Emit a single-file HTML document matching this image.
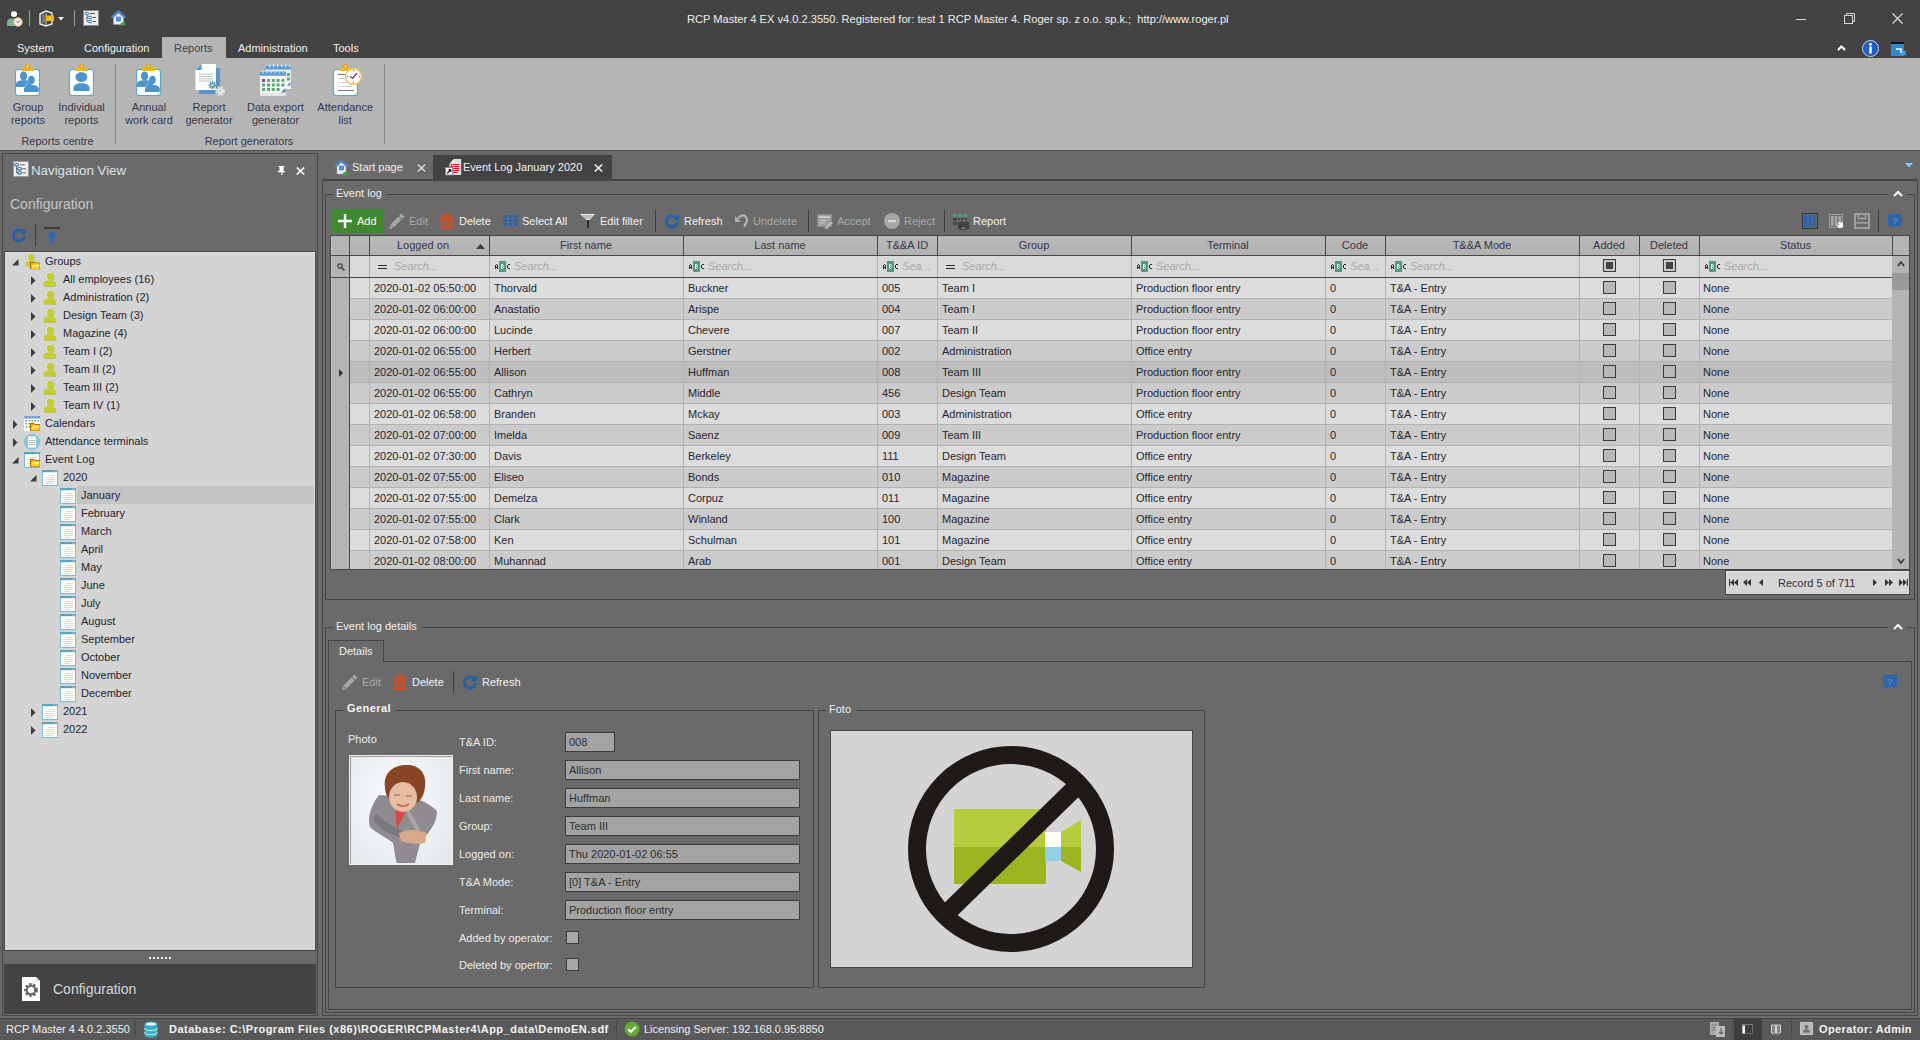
<!DOCTYPE html>
<html><head><meta charset="utf-8">
<style>
*{box-sizing:border-box;margin:0;padding:0}
html,body{width:1920px;height:1040px;overflow:hidden;background:#6a6a6a;font-family:"Liberation Sans",sans-serif;font-size:11px;color:#222}
.a{position:absolute}
.t{position:absolute;white-space:nowrap;line-height:13px}
svg{position:absolute;overflow:visible}
.m{color:#f2f2f2}
.rb{color:#35354a}
.tr{color:#23232e}
.hd{color:#36364a}
.ce{color:#25252f}
.se{color:#a9a9a9;font-style:italic}
.tb{color:#f4f4f4}
.td{color:#a9a9a9}
.lb{color:#ececec}
.fd{position:absolute;background:#a3a3a3;border:1px solid #3c3c3c}
.fv{color:#2e2e2e}
</style></head><body>
<svg width="0" height="0" style="position:absolute">
<defs>
<symbol id="person" viewBox="0 0 16 16"><ellipse cx="9" cy="5" rx="3.6" ry="4" fill="#999" opacity=".5"/><path d="M3 15v-2.5c0-2 2-3.2 4-3.6h3c2 .4 4 1.6 4 3.6V15z" fill="#999" opacity=".5"/><ellipse cx="7.6" cy="4.6" rx="3.6" ry="4" fill="#fff" opacity=".8"/><ellipse cx="8" cy="4.6" rx="3.4" ry="3.9" fill="#c5cd2a"/><path d="M1.5 14.5v-2.3c0-2 2-3.3 4-3.7h4.6c2 .4 4 1.7 4 3.7v2.3z" fill="#c5cd2a"/></symbol>
<symbol id="folder" viewBox="0 0 10 8"><path d="M.5 .5h3.5l1 1h4.5v6h-9z" fill="#e8b000" stroke="#a86e00"/><path d="M1.5 4l2-2h6v5.5h-8z" fill="#ffd21e"/><path d="M2 5.5l1.5-1.5h6" stroke="#fff" stroke-width=".8" fill="none"/></symbol>
<symbol id="page" viewBox="0 0 16 16"><rect x=".5" y=".5" width="15" height="15" fill="#fff" stroke="#7fb9cc"/><rect x="0" y="0" width="16" height="2.2" fill="#5aa3bc"/><path d="M12 1.1h1M14 1.1h1" stroke="#d8ecf2" stroke-width=".8"/><path d="M6 5.5h7M3.5 7.5h9.5M3.5 9.5h9.5M3.5 11.5h9.5M3.5 13.5h7" stroke="#dcd4c2" stroke-width=".9"/></symbol>
<symbol id="refresh" viewBox="0 0 15 15"><path d="M12.6 8.2A5.6 5.6 0 1 1 10.6 3.2" fill="none" stroke="#2860a8" stroke-width="3"/><path d="M14.2 0v6.2H8z" fill="#2860a8"/></symbol>
<symbol id="trash" viewBox="0 0 14 16"><rect x="4.6" y=".7" width="4.8" height="2.6" fill="none" stroke="#d04e28" stroke-width="1.4"/><rect x="0" y="3.2" width="14" height="2.2" fill="#d04e28"/><rect x="1" y="6.3" width="12" height="9.7" fill="#d04e28"/><rect x="3" y="8.3" width="1.4" height="5.7" fill="#6a6a6a"/><rect x="6.3" y="8.3" width="1.4" height="5.7" fill="#6a6a6a"/><rect x="9.6" y="8.3" width="1.4" height="5.7" fill="#6a6a6a"/></symbol>
<symbol id="pencil" viewBox="0 0 16 16"><path d="M12.3 .6l3.1 3.1-2.2 2.2-3.1-3.1z" fill="#a6a6a6"/><path d="M9.5 3.4l3.1 3.1-8 8-3.1-3.1z" fill="#a6a6a6"/><path d="M1 12l3 3-3.6.9z" fill="#a6a6a6"/></symbol>
<symbol id="help" viewBox="0 0 14 16"><path d="M0 0h14v12H6l-3 3v-3H0z" fill="#2e66ad"/><text x="7" y="9.5" font-family="Liberation Sans" font-size="9.5" font-weight="bold" fill="#6a86b0" text-anchor="middle">?</text></symbol>
<symbol id="abc" viewBox="0 0 16 11" shape-rendering="crispEdges"><g fill="#2a2a2a"><rect x="0" y="4" width="1" height="4"/><rect x="2" y="4" width="1" height="4"/><rect x="1" y="3" width="1" height="1"/><rect x="1" y="6" width="1" height="1"/><rect x="12" y="4" width="1" height="3"/><rect x="13" y="3" width="2" height="1"/><rect x="13" y="7" width="2" height="1"/></g><rect x="4" y="0" width="7" height="11" fill="#519a7d"/><g fill="#e8f2ee"><rect x="6" y="3" width="1" height="5"/><rect x="7" y="3" width="1" height="1"/><rect x="7" y="5" width="1" height="1"/><rect x="7" y="7" width="1" height="1"/><rect x="8" y="4" width="1" height="1"/><rect x="8" y="6" width="1" height="1"/></g></symbol>
<symbol id="chk" viewBox="0 0 13 13"><rect x=".5" y=".5" width="12" height="12" fill="#b8b8b8" stroke="#3a3a3a"/></symbol>
<symbol id="chki" viewBox="0 0 13 13"><rect x=".5" y=".5" width="12" height="12" fill="#c8c8c8" stroke="#3a3a3a"/><rect x="3" y="3" width="7" height="7" fill="#444"/></symbol>
<symbol id="clip" viewBox="0 0 26 32"><rect x="1" y="6" width="24" height="25" rx="2" fill="#fff" stroke="#4fa9c4" stroke-width="1.5"/><rect x="7" y="4" width="12" height="3" fill="#f0b30f"/><circle cx="13" cy="3" r="2.4" fill="#e8a416"/><circle cx="13" cy="3" r=".9" fill="#fff"/><path d="M21 31l4-4v4z" fill="#e6e0d0"/></symbol>
</defs></svg>

<div class="a" style="left:0px;top:0px;width:1920px;height:58px;background:#434343"></div>
<div class="t" style="left:687px;top:13px;line-height:13px;color:#eeeeee;font-size:11.1px">RCP Master 4 EX v4.0.2.3550. Registered for: test 1 RCP Master 4. Roger sp. z o.o. sp.k.;&nbsp; http://www.roger.pl</div>
<svg style="left:6px;top:10px" width="16" height="17" viewBox="0 0 16 17"><circle cx="8" cy="4" r="3" fill="#fff"/><path d="M6 1.5a2.5 2 0 0 1 4 0" fill="#3a6b8a"/><path d="M1 16v-4c0-2.5 2-3.5 4-3.5h6c2 0 4 1 4 3.5v4z" fill="#79b39a"/><circle cx="12" cy="12" r="4.3" fill="#f6f0e8" stroke="#e0b060" stroke-width="1"/><path d="M10.5 11l1.5 2 2-3" stroke="#9a80c0" stroke-width="1" fill="none"/></svg>
<div class="a" style="left:29px;top:10px;width:1px;height:16px;background:#9a9a9a"></div>
<svg style="left:38px;top:10px" width="18" height="17" viewBox="0 0 18 17"><path d="M2 4l6-3 6 2v11l-6 2-6-2z" fill="none" stroke="#f0f0f0" stroke-width="1.4"/><path d="M5 4.5v9M8 3v12" stroke="#bbb" stroke-width="1.2"/><path d="M3.5 5v8l4-1V5z" fill="#777"/><rect x="8" y="5.5" width="8" height="5.5" fill="#f5b400"/><path d="M11 7l2 1.5-2 1" stroke="#fff" stroke-width=".8" fill="none"/></svg>
<svg style="left:58px;top:17px" width="6" height="4" viewBox="0 0 6 4"><path d="M0 0h6l-3 3.5z" fill="#eee"/></svg>
<div class="a" style="left:74px;top:10px;width:1px;height:16px;background:#9a9a9a"></div>
<svg style="left:83px;top:10px" width="16" height="16" viewBox="0 0 16 16"><rect x=".5" y=".5" width="15" height="15" fill="#fff" stroke="#888"/><rect x="1" y="1" width="14" height="14" fill="#eee"/><ellipse cx="4" cy="3.5" rx="2" ry="1.3" fill="#fff" stroke="#2d6bb5" stroke-width="1"/><ellipse cx="7" cy="7.5" rx="2" ry="1.3" fill="#fff" stroke="#2d6bb5"/><ellipse cx="7" cy="11.5" rx="2" ry="1.3" fill="#fff" stroke="#2d6bb5"/><path d="M4 5v6.5h1M4 7.5h1" stroke="#333" stroke-width=".7" fill="none"/><path d="M7 3.5h5M10 7.5h3M10 11.5h3" stroke="#555" stroke-width="1"/></svg>
<svg style="left:110px;top:10px" width="17" height="16" viewBox="0 0 17 16"><path d="M1.5 7.5L8.5 1l7 6.5" fill="none" stroke="#4a86cc" stroke-width="2"/><path d="M3.5 7.5l5-4.5 5 4.5v7h-10z" fill="#eef0fa" stroke="#9aa0c0" stroke-width=".6"/><rect x="6.5" y="7" width="4" height="4" fill="#4f9ae8" stroke="#2d5ea8" stroke-width=".6"/><ellipse cx="13" cy="14" rx="2.6" ry="1.8" fill="#3faa2a"/></svg>
<div class="a" style="left:1796px;top:19px;width:10px;height:1px;background:#d8d8d8"></div>
<svg style="left:1844px;top:13px" width="11" height="11" viewBox="0 0 11 11"><rect x=".5" y="2.5" width="8" height="8" fill="none" stroke="#d8d8d8"/><path d="M2.5 2.5v-2h8v8h-2" fill="none" stroke="#d8d8d8"/></svg>
<svg style="left:1892px;top:13px" width="11" height="11" viewBox="0 0 11 11"><path d="M.5 .5l10 10M10.5 .5l-10 10" stroke="#e0e0e0" stroke-width="1.1"/></svg>
<svg style="left:1837px;top:45px" width="9" height="6" viewBox="0 0 9 6"><path d="M1 5l3.5-3.5L8 5" fill="none" stroke="#fff" stroke-width="2"/></svg>
<svg style="left:1862px;top:40px" width="17" height="17" viewBox="0 0 17 17"><circle cx="8.5" cy="8.5" r="8" fill="#1f5fbf" stroke="#c8d8f0" stroke-width="1"/><circle cx="8.5" cy="4.3" r="1.4" fill="#fff"/><rect x="7.3" y="6.5" width="2.4" height="7" fill="#fff"/></svg>
<svg style="left:1891px;top:41px" width="16" height="16" viewBox="0 0 16 16"><rect x="0" y="2" width="13" height="13" fill="#2f8ad0"/><rect x="0" y="1" width="13" height="2" fill="#111"/><path d="M5 8h5v4" stroke="#fff" stroke-width="1.5" fill="none"/><path d="M11 10l4 4M15 10l-4 4" stroke="#48a8e8" stroke-width="1.6"/></svg>
<div class="a" style="left:162px;top:37px;width:64px;height:21px;background:#b5b5b5"></div>
<div class="t m" style="left:17px;top:42px;line-height:13px">System</div>
<div class="t m" style="left:84px;top:42px;line-height:13px">Configuration</div>
<div class="t" style="left:174px;top:42px;line-height:13px;color:#3e3e55">Reports</div>
<div class="t m" style="left:238px;top:42px;line-height:13px">Administration</div>
<div class="t m" style="left:333px;top:42px;line-height:13px">Tools</div>
<div class="a" style="left:0px;top:58px;width:1920px;height:92px;background:#b5b5b5"></div>
<div class="a" style="left:0px;top:150px;width:1920px;height:1px;background:#4e4e4e"></div>
<svg style="left:14px;top:63px" width="29" height="34" viewBox="0 0 29 34"><g transform="translate(1 1)"><rect x=".5" y="5.5" width="24" height="26" rx="2.5" fill="#fff" stroke="#58a8c4" stroke-width="1.2"/><path d="M1 23v-3c0-2.3 2.5-3.3 5-3.8h5.5c2.5.5 5 1.5 5 3.8v3z" fill="#4e94cc"/><path d="M5 12c0-3 1.5-4.5 3.6-4.5S12.2 9 12.2 12s-1.6 4.6-3.6 4.6S5 15 5 12z" fill="#4e94cc"/><path d="M9 28v-3.2c0-2.3 2.4-3.4 4.8-3.9h5.2c2.4.5 4.8 1.6 4.8 3.9V28z" fill="#4e94cc"/><path d="M13 16c0-2.8 1.5-4.2 3.4-4.2s3.4 1.4 3.4 4.2-1.5 4.3-3.4 4.3S13 18.8 13 16z" fill="#4e94cc"/><path d="M12.5 18.5l-3 4.5" stroke="#fff" stroke-width=".9" stroke-dasharray="1 1"/><path d="M20 31l4.2-4.2v2.5a2 2 0 0 1-2 1.7z" fill="#e8e2cc"/><rect x="6" y="4" width="13" height="3" fill="#f0b814"/><circle cx="12.5" cy="2.3" r="2.4" fill="#e6a01a"/><rect x="12" y="1.3" width="1" height="2" fill="#fff"/></g></svg>
<svg style="left:68px;top:63px" width="29" height="34" viewBox="0 0 29 34"><g transform="translate(1 1)"><rect x=".5" y="5.5" width="24" height="26" rx="2.5" fill="#fff" stroke="#58a8c4" stroke-width="1.2"/><path d="M6.5 12.5c0-3.2 2.7-4.8 5.9-4.8s5.9 1.6 5.9 4.8-2.7 5.4-5.9 5.4-5.9-2.2-5.9-5.4z" fill="#4e94cc" transform="translate(0 1) scale(1 .95)"/><path d="M4.5 27v-3.5c0-2.4 3-3.8 6-4.3h4c3 .5 6 1.9 6 4.3V27z" fill="#4e94cc"/><path d="M20 31l4.2-4.2v2.5a2 2 0 0 1-2 1.7z" fill="#e8e2cc"/><rect x="6" y="4" width="13" height="3" fill="#f0b814"/><circle cx="12.5" cy="2.3" r="2.4" fill="#e6a01a"/><rect x="12" y="1.3" width="1" height="2" fill="#fff"/></g></svg>
<div class="a" style="left:115px;top:64px;width:1px;height:80px;background:#8a8a8a"></div>
<svg style="left:135px;top:63px" width="29" height="34" viewBox="0 0 29 34"><g transform="translate(1 1)"><rect x=".5" y="5.5" width="24" height="26" rx="2.5" fill="#fff" stroke="#58a8c4" stroke-width="1.2"/><path d="M1 23v-3c0-2.3 2.5-3.3 5-3.8h5.5c2.5.5 5 1.5 5 3.8v3z" fill="#4e94cc"/><path d="M5 12c0-3 1.5-4.5 3.6-4.5S12.2 9 12.2 12s-1.6 4.6-3.6 4.6S5 15 5 12z" fill="#4e94cc"/><path d="M9 28v-3.2c0-2.3 2.4-3.4 4.8-3.9h5.2c2.4.5 4.8 1.6 4.8 3.9V28z" fill="#4e94cc"/><path d="M13 16c0-2.8 1.5-4.2 3.4-4.2s3.4 1.4 3.4 4.2-1.5 4.3-3.4 4.3S13 18.8 13 16z" fill="#4e94cc"/><path d="M12.5 18.5l-3 4.5" stroke="#fff" stroke-width=".9" stroke-dasharray="1 1"/><path d="M20 31l4.2-4.2v2.5a2 2 0 0 1-2 1.7z" fill="#e8e2cc"/><rect x="6" y="4" width="13" height="3" fill="#f0b814"/><circle cx="12.5" cy="2.3" r="2.4" fill="#e6a01a"/><rect x="12" y="1.3" width="1" height="2" fill="#fff"/></g></svg>
<svg style="left:195px;top:63px" width="30" height="34" viewBox="0 0 30 34"><rect x="4" y="5" width="21" height="26" fill="#5a94cc"/><path d="M6.5 1h14.5v26H.5V7z" fill="#fff"/><path d="M6.5 1v6H.5z" fill="#5a94cc"/><path d="M4 11h14M4 13.5h14M4 15.8h14M4 18h14" stroke="#b8c4c4" stroke-width="1"/><g transform="translate(17.5 22.2)"><circle r="3" fill="none" stroke="#5aa0b0" stroke-width="2.2" stroke-dasharray="1.3 .9"/><circle r="2.6" fill="#5aa0b0"/><circle r="1" fill="#fff"/></g><g transform="translate(25 28)"><circle r="3.6" fill="none" stroke="#ece8e8" stroke-width="2.6" stroke-dasharray="1.7 1.2"/><circle r="3" fill="#ece8e8"/><circle r="1.1" fill="#b5b5b5"/></g></svg>
<svg style="left:259px;top:63px" width="34" height="33" viewBox="0 0 34 33"><rect x="7" y="2" width="25" height="24" fill="#f2f2f2"/><rect x="7" y="2.5" width="25" height="4" fill="#5a98d0"/><rect x="1" y="8" width="26" height="25" fill="#f6f6f6"/><rect x="1" y="8.5" width="26" height="4.2" fill="#5a98d0"/><g fill="#cfe0ee"><rect x="10" y="1" width="1.2" height="3.5"/><rect x="14" y="1" width="1.2" height="3.5"/><rect x="18" y="1" width="1.2" height="3.5"/><rect x="22" y="1" width="1.2" height="3.5"/><rect x="26" y="1" width="1.2" height="3.5"/><rect x="30" y="1" width="1.2" height="3.5"/><rect x="3.5" y="7" width="1.2" height="3.5"/><rect x="7.5" y="7" width="1.2" height="3.5"/><rect x="11.5" y="7" width="1.2" height="3.5"/><rect x="15.5" y="7" width="1.2" height="3.5"/><rect x="19.5" y="7" width="1.2" height="3.5"/><rect x="23.5" y="7" width="1.2" height="3.5"/></g><g fill="#5aa878"><rect x="3" y="16" width="3" height="3" fill="#7a4aa8"/><rect x="8" y="16" width="3" height="3"/><rect x="12.8" y="16" width="3" height="3"/><rect x="17.6" y="16" width="3" height="3"/><rect x="22.4" y="16" width="3" height="3"/><rect x="3" y="20.5" width="3" height="3"/><rect x="8" y="20.5" width="3" height="3"/><rect x="12.8" y="20.5" width="3" height="3"/><rect x="17.6" y="20.5" width="3" height="3"/><rect x="22.4" y="20.5" width="3" height="3"/><rect x="3" y="25" width="3" height="3"/><rect x="8" y="25" width="3" height="3"/><rect x="12.8" y="25" width="3" height="3"/><rect x="17.6" y="25" width="3" height="3"/><rect x="28" y="10" width="3" height="3"/><rect x="28" y="14.5" width="3" height="3"/></g><path d="M22 29.5l4.5-4.5v4.5z" fill="#4a80b8"/><path d="M28 22.5l3.5-3.5v3.5z" fill="#4a80b8"/><rect x="1" y="30" width="26" height="3" fill="#e6e6e6"/></svg>
<svg style="left:332px;top:63px" width="29" height="34" viewBox="0 0 29 34"><g transform="translate(1 1)"><rect x=".5" y="5.5" width="24" height="26" rx="2.5" fill="#fff" stroke="#58a8c4" stroke-width="1.2"/><path d="M5 10.5h10M5 14.5h14M5 18.5h14M5 22.5h14" stroke="#d0d0d0" stroke-width="1"/><path d="M5 10.5h10M5 26.5h16" stroke="#7a7a6a" stroke-width="1.1"/><path d="M20 31l4.2-4.2v2.5a2 2 0 0 1-2 1.7z" fill="#e8e2cc"/><rect x="6" y="4" width="13" height="3" fill="#f0b814"/><circle cx="12.5" cy="2.3" r="2.4" fill="#e6a01a"/><rect x="12" y="1.3" width="1" height="2" fill="#fff"/></g></svg>
<svg style="left:333px;top:64px" width="30" height="33" viewBox="0 0 30 33"><circle cx="20.5" cy="12.5" r="8" fill="#fffdf8" stroke="#f0c040" stroke-width="1.3"/><path d="M17 12.5l2.6 1.8 4.4-5" stroke="#6a40a8" stroke-width="1.4" fill="none"/><circle cx="20.5" cy="6.5" r=".7" fill="#e04040"/><circle cx="20.5" cy="18.5" r=".7" fill="#e04040"/><circle cx="14.5" cy="12.5" r=".7" fill="#e04040"/><circle cx="26.5" cy="12.5" r=".7" fill="#e04040"/></svg>
<div class="a" style="left:384px;top:64px;width:1px;height:80px;background:#8a8a8a"></div>
<div class="t rb" style="left:-32px;top:101px;width:120px;text-align:center">Group</div>
<div class="t rb" style="left:-32px;top:114px;width:120px;text-align:center">reports</div>
<div class="t rb" style="left:21.5px;top:101px;width:120px;text-align:center">Individual</div>
<div class="t rb" style="left:21.5px;top:114px;width:120px;text-align:center">reports</div>
<div class="t rb" style="left:89px;top:101px;width:120px;text-align:center">Annual</div>
<div class="t rb" style="left:89px;top:114px;width:120px;text-align:center">work card</div>
<div class="t rb" style="left:149px;top:101px;width:120px;text-align:center">Report</div>
<div class="t rb" style="left:149px;top:114px;width:120px;text-align:center">generator</div>
<div class="t rb" style="left:215.5px;top:101px;width:120px;text-align:center">Data export</div>
<div class="t rb" style="left:215.5px;top:114px;width:120px;text-align:center">generator</div>
<div class="t rb" style="left:285.2px;top:101px;width:120px;text-align:center">Attendance</div>
<div class="t rb" style="left:285.2px;top:114px;width:120px;text-align:center">list</div>
<div class="t rb" style="left:-2.5px;top:135px;width:120px;text-align:center">Reports centre</div>
<div class="t rb" style="left:189px;top:135px;width:120px;text-align:center">Report generators</div>
<div class="a" style="left:2px;top:153px;width:316px;height:1px;background:#484848"></div>
<div class="a" style="left:2px;top:153px;width:1px;height:863px;background:#484848"></div>
<div class="a" style="left:317px;top:153px;width:1px;height:863px;background:#484848"></div>
<div class="a" style="left:2px;top:1015px;width:316px;height:1px;background:#484848"></div>
<svg style="left:13px;top:161px" width="16" height="16" viewBox="0 0 16 16"><rect x=".5" y=".5" width="15" height="15" fill="#fff" stroke="#999"/><rect x="1" y="1" width="14" height="14" fill="#f0f0f0"/><ellipse cx="3.6" cy="3.8" rx="2" ry="1.3" fill="#fff" stroke="#2d6bb5" stroke-width="1.1"/><ellipse cx="6.6" cy="7.8" rx="2" ry="1.3" fill="#fff" stroke="#2d6bb5" stroke-width="1.1"/><ellipse cx="6.6" cy="11.8" rx="2" ry="1.3" fill="#fff" stroke="#2d6bb5" stroke-width="1.1"/><path d="M3.6 5.2v6.6h1M3.6 7.8h1" stroke="#333" stroke-width=".7" fill="none"/><path d="M7 3.8h5M9.5 7.8h3.5M9.5 11.8h3.5" stroke="#666" stroke-width="1"/></svg>
<div class="t" style="left:31px;top:164px;line-height:16px;font-size:13.3px;color:#dbe1e8;top:163px;line-height:16px">Navigation View</div>
<svg style="left:278px;top:166px" width="8" height="9" viewBox="0 0 8 9"><path d="M1.5 0h5v1h-1v4h1.5v1.2H4.6V9H3.4V6.2H0V5h1.5V1h-1V0z" fill="#fff"/></svg>
<svg style="left:296px;top:167px" width="9" height="8" viewBox="0 0 9 8"><path d="M.8 .5l7.4 7M8.2 .5L.8 7.5" stroke="#fff" stroke-width="1.7"/></svg>
<div class="t" style="left:10px;top:196px;font-size:14px;line-height:16px;color:#c6c6c6">Configuration</div>
<svg style="left:12px;top:228px" width="15" height="15" viewBox="0 0 15 15"><use href="#refresh" width="15" height="15"/></svg>
<div class="a" style="left:35px;top:224px;width:1px;height:22px;background:#3e3e3e"></div>
<svg style="left:44px;top:227px" width="16" height="16" viewBox="0 0 16 16"><rect x="0" y="0" width="16" height="2" fill="#3a3a3a"/><path d="M8 3.5L2 9.5h4v6.5h4V9.5h4z" fill="#2d6bb5"/></svg>
<div class="a" style="left:4px;top:251px;width:312px;height:1px;background:#444"></div>
<div class="a" style="left:4px;top:251px;width:1px;height:700px;background:#444"></div>
<div class="a" style="left:315px;top:251px;width:1px;height:700px;background:#444"></div>
<div class="a" style="left:5px;top:252px;width:310px;height:698px;background:#d4d4d4"></div>
<div class="a" style="left:5px;top:252px;width:310px;height:1px;background:#e2e2e2"></div>
<div class="a" style="left:314px;top:252px;width:1px;height:698px;background:#e0e0e0"></div>
<div class="a" style="left:4px;top:950px;width:312px;height:1px;background:#444"></div>
<div class="a" style="left:77px;top:486px;width:237px;height:18px;background:#c4c4c4"></div>
<svg style="left:12px;top:259px" width="7" height="7" viewBox="0 0 7 7"><path d="M6.5 0v6.5H0z" fill="#3c3c3c"/></svg>
<svg style="left:24px;top:254px" width="16" height="16" viewBox="0 0 16 16"><use href="#person" width="14" height="15" x="0" y="-1"/><use href="#folder" x="6" y="7.5" width="10" height="8"/></svg>
<div class="t tr" style="left:45px;top:255px;line-height:13px">Groups</div>
<svg style="left:31px;top:276px" width="5" height="9" viewBox="0 0 5 9"><path d="M0 0l4.5 4.5L0 9z" fill="#3c3c3c"/></svg>
<svg style="left:42px;top:272px" width="16" height="16" viewBox="0 0 16 16"><use href="#person" width="16" height="16"/></svg>
<div class="t tr" style="left:63px;top:273px;line-height:13px">All employees (16)</div>
<svg style="left:31px;top:294px" width="5" height="9" viewBox="0 0 5 9"><path d="M0 0l4.5 4.5L0 9z" fill="#3c3c3c"/></svg>
<svg style="left:42px;top:290px" width="16" height="16" viewBox="0 0 16 16"><use href="#person" width="16" height="16"/></svg>
<div class="t tr" style="left:63px;top:291px;line-height:13px">Administration (2)</div>
<svg style="left:31px;top:312px" width="5" height="9" viewBox="0 0 5 9"><path d="M0 0l4.5 4.5L0 9z" fill="#3c3c3c"/></svg>
<svg style="left:42px;top:308px" width="16" height="16" viewBox="0 0 16 16"><use href="#person" width="16" height="16"/></svg>
<div class="t tr" style="left:63px;top:309px;line-height:13px">Design Team (3)</div>
<svg style="left:31px;top:330px" width="5" height="9" viewBox="0 0 5 9"><path d="M0 0l4.5 4.5L0 9z" fill="#3c3c3c"/></svg>
<svg style="left:42px;top:326px" width="16" height="16" viewBox="0 0 16 16"><use href="#person" width="16" height="16"/></svg>
<div class="t tr" style="left:63px;top:327px;line-height:13px">Magazine (4)</div>
<svg style="left:31px;top:348px" width="5" height="9" viewBox="0 0 5 9"><path d="M0 0l4.5 4.5L0 9z" fill="#3c3c3c"/></svg>
<svg style="left:42px;top:344px" width="16" height="16" viewBox="0 0 16 16"><use href="#person" width="16" height="16"/></svg>
<div class="t tr" style="left:63px;top:345px;line-height:13px">Team I (2)</div>
<svg style="left:31px;top:366px" width="5" height="9" viewBox="0 0 5 9"><path d="M0 0l4.5 4.5L0 9z" fill="#3c3c3c"/></svg>
<svg style="left:42px;top:362px" width="16" height="16" viewBox="0 0 16 16"><use href="#person" width="16" height="16"/></svg>
<div class="t tr" style="left:63px;top:363px;line-height:13px">Team II (2)</div>
<svg style="left:31px;top:384px" width="5" height="9" viewBox="0 0 5 9"><path d="M0 0l4.5 4.5L0 9z" fill="#3c3c3c"/></svg>
<svg style="left:42px;top:380px" width="16" height="16" viewBox="0 0 16 16"><use href="#person" width="16" height="16"/></svg>
<div class="t tr" style="left:63px;top:381px;line-height:13px">Team III (2)</div>
<svg style="left:31px;top:402px" width="5" height="9" viewBox="0 0 5 9"><path d="M0 0l4.5 4.5L0 9z" fill="#3c3c3c"/></svg>
<svg style="left:42px;top:398px" width="16" height="16" viewBox="0 0 16 16"><use href="#person" width="16" height="16"/></svg>
<div class="t tr" style="left:63px;top:399px;line-height:13px">Team IV (1)</div>
<svg style="left:13px;top:420px" width="5" height="9" viewBox="0 0 5 9"><path d="M0 0l4.5 4.5L0 9z" fill="#3c3c3c"/></svg>
<svg style="left:24px;top:416px" width="16" height="16" viewBox="0 0 16 16"><rect x="0" y="1" width="16" height="14" fill="#fff"/><rect x="0" y="0" width="16" height="2.5" fill="#6a98cc"/><path d="M1 .3v1.5M4 .3v1.5M7 .3v1.5M10 .3v1.5M13 .3v1.5" stroke="#fff" stroke-width=".6"/><g fill="#5aa878"><rect x="1.5" y="4" width="1.5" height="1.5" fill="#7a4aa8"/><rect x="4.5" y="4" width="1.5" height="1.5"/><rect x="7.5" y="4" width="1.5" height="1.5"/><rect x="10.5" y="4" width="1.5" height="1.5"/><rect x="13.5" y="4" width="1.5" height="1.5"/><rect x="1.5" y="7" width="1.5" height="1.5"/><rect x="4.5" y="7" width="1.5" height="1.5"/><rect x="1.5" y="10" width="1.5" height="1.5"/><rect x="4.5" y="10" width="1.5" height="1.5"/></g><use href="#folder" x="6" y="7" width="10" height="8"/></svg>
<div class="t tr" style="left:45px;top:417px;line-height:13px">Calendars</div>
<svg style="left:13px;top:438px" width="5" height="9" viewBox="0 0 5 9"><path d="M0 0l4.5 4.5L0 9z" fill="#3c3c3c"/></svg>
<svg style="left:24px;top:434px" width="16" height="16" viewBox="0 0 16 16"><circle cx="8" cy="8" r="8" fill="#8cc3d5"/><rect x="4" y="2.5" width="8" height="11" fill="#fff"/><path d="M4.5 4.5h7" stroke="#cfd8dc" stroke-width=".8"/><g fill="#9aa4a8"><rect x="5" y="6" width="1.4" height="1"/><rect x="7.3" y="6" width="1.4" height="1"/><rect x="9.6" y="6" width="1.4" height="1"/><rect x="5" y="8" width="1.4" height="1"/><rect x="7.3" y="8" width="1.4" height="1"/><rect x="9.6" y="8" width="1.4" height="1"/><rect x="5" y="10" width="1.4" height="1"/><rect x="7.3" y="10" width="1.4" height="1"/><rect x="9.6" y="10" width="1.4" height="1"/></g></svg>
<div class="t tr" style="left:45px;top:435px;line-height:13px">Attendance terminals</div>
<svg style="left:12px;top:457px" width="7" height="7" viewBox="0 0 7 7"><path d="M6.5 0v6.5H0z" fill="#3c3c3c"/></svg>
<svg style="left:24px;top:452px" width="16" height="16" viewBox="0 0 16 16"><use href="#page" width="16" height="16"/><use href="#folder" x="6" y="7" width="10" height="8"/></svg>
<div class="t tr" style="left:45px;top:453px;line-height:13px">Event Log</div>
<svg style="left:30px;top:475px" width="7" height="7" viewBox="0 0 7 7"><path d="M6.5 0v6.5H0z" fill="#3c3c3c"/></svg>
<svg style="left:42px;top:470px" width="16" height="16" viewBox="0 0 16 16"><use href="#page" width="16" height="16"/></svg>
<div class="t tr" style="left:63px;top:471px;line-height:13px">2020</div>
<svg style="left:60px;top:488px" width="16" height="16" viewBox="0 0 16 16"><use href="#page" width="16" height="16"/></svg>
<div class="t tr" style="left:81px;top:489px;line-height:13px">January</div>
<svg style="left:60px;top:506px" width="16" height="16" viewBox="0 0 16 16"><use href="#page" width="16" height="16"/></svg>
<div class="t tr" style="left:81px;top:507px;line-height:13px">February</div>
<svg style="left:60px;top:524px" width="16" height="16" viewBox="0 0 16 16"><use href="#page" width="16" height="16"/></svg>
<div class="t tr" style="left:81px;top:525px;line-height:13px">March</div>
<svg style="left:60px;top:542px" width="16" height="16" viewBox="0 0 16 16"><use href="#page" width="16" height="16"/></svg>
<div class="t tr" style="left:81px;top:543px;line-height:13px">April</div>
<svg style="left:60px;top:560px" width="16" height="16" viewBox="0 0 16 16"><use href="#page" width="16" height="16"/></svg>
<div class="t tr" style="left:81px;top:561px;line-height:13px">May</div>
<svg style="left:60px;top:578px" width="16" height="16" viewBox="0 0 16 16"><use href="#page" width="16" height="16"/></svg>
<div class="t tr" style="left:81px;top:579px;line-height:13px">June</div>
<svg style="left:60px;top:596px" width="16" height="16" viewBox="0 0 16 16"><use href="#page" width="16" height="16"/></svg>
<div class="t tr" style="left:81px;top:597px;line-height:13px">July</div>
<svg style="left:60px;top:614px" width="16" height="16" viewBox="0 0 16 16"><use href="#page" width="16" height="16"/></svg>
<div class="t tr" style="left:81px;top:615px;line-height:13px">August</div>
<svg style="left:60px;top:632px" width="16" height="16" viewBox="0 0 16 16"><use href="#page" width="16" height="16"/></svg>
<div class="t tr" style="left:81px;top:633px;line-height:13px">September</div>
<svg style="left:60px;top:650px" width="16" height="16" viewBox="0 0 16 16"><use href="#page" width="16" height="16"/></svg>
<div class="t tr" style="left:81px;top:651px;line-height:13px">October</div>
<svg style="left:60px;top:668px" width="16" height="16" viewBox="0 0 16 16"><use href="#page" width="16" height="16"/></svg>
<div class="t tr" style="left:81px;top:669px;line-height:13px">November</div>
<svg style="left:60px;top:686px" width="16" height="16" viewBox="0 0 16 16"><use href="#page" width="16" height="16"/></svg>
<div class="t tr" style="left:81px;top:687px;line-height:13px">December</div>
<svg style="left:31px;top:708px" width="5" height="9" viewBox="0 0 5 9"><path d="M0 0l4.5 4.5L0 9z" fill="#3c3c3c"/></svg>
<svg style="left:42px;top:704px" width="16" height="16" viewBox="0 0 16 16"><use href="#page" width="16" height="16"/></svg>
<div class="t tr" style="left:63px;top:705px;line-height:13px">2021</div>
<svg style="left:31px;top:726px" width="5" height="9" viewBox="0 0 5 9"><path d="M0 0l4.5 4.5L0 9z" fill="#3c3c3c"/></svg>
<svg style="left:42px;top:722px" width="16" height="16" viewBox="0 0 16 16"><use href="#page" width="16" height="16"/></svg>
<div class="t tr" style="left:63px;top:723px;line-height:13px">2022</div>
<div class="a" style="left:149px;top:957px;width:2px;height:2px;background:#f0f0f0"></div>
<div class="a" style="left:153px;top:957px;width:2px;height:2px;background:#f0f0f0"></div>
<div class="a" style="left:157px;top:957px;width:2px;height:2px;background:#f0f0f0"></div>
<div class="a" style="left:161px;top:957px;width:2px;height:2px;background:#f0f0f0"></div>
<div class="a" style="left:165px;top:957px;width:2px;height:2px;background:#f0f0f0"></div>
<div class="a" style="left:169px;top:957px;width:2px;height:2px;background:#f0f0f0"></div>
<div class="a" style="left:4px;top:964px;width:312px;height:50px;background:#434343"></div>
<svg style="left:22px;top:977px" width="19" height="25" viewBox="0 0 19 25"><path d="M0 0h14l4 4v20H0z" fill="#fff"/><path d="M14 0v4h4" fill="#ddd"/><g transform="translate(9 13)"><circle r="5.2" fill="none" stroke="#666" stroke-width="3.4" stroke-dasharray="2.2 1.5"/><circle r="4.2" fill="none" stroke="#666" stroke-width="2"/><circle r="1.8" fill="#fff"/></g></svg>
<div class="t" style="left:53px;top:981px;font-size:14px;line-height:16px;color:#d4d8dc">Configuration</div>
<svg style="left:334px;top:159px" width="15" height="17" viewBox="0 0 15 17"><path d="M1 7.5L7.5 1.5 14 7.5" fill="none" stroke="#4a86cc" stroke-width="2"/><path d="M3 7.5l4.5-4 4.5 4v7.5H3z" fill="#eef0fa" stroke="#9aa0c0" stroke-width=".6"/><rect x="5.5" y="7" width="4" height="4" fill="#4f9ae8" stroke="#2d5ea8" stroke-width=".6"/><ellipse cx="11.5" cy="14.5" rx="2.6" ry="1.8" fill="#3faa2a"/></svg>
<div class="t" style="left:352px;top:161px;line-height:13px;color:#f0f0f0">Start page</div>
<svg style="left:417px;top:164px" width="9" height="8" viewBox="0 0 9 8"><path d="M.8 .5l7.4 7M8.2 .5L.8 7.5" stroke="#d8d8d8" stroke-width="1.6"/></svg>
<div class="a" style="left:433px;top:155px;width:179px;height:24px;background:#434343"></div>
<svg style="left:445px;top:158px" width="17" height="18" viewBox="0 0 17 18"><path d="M4.5 6L8.8 1H16.2V17H4.5z" fill="#e0e3e3"/><path d="M4.5 6L8.8 1v5z" fill="#f4f4f4"/><g fill="#ff0000"><circle cx="6.5" cy="6.5" r=".95"/><circle cx="6.5" cy="8.5" r=".95"/></g><path d="M8.3 6.5h5.6M8.3 8.5h5.6M8.3 10.5h5.6M8.3 12.5h5.6M8.3 14.5h3.6" stroke="#ff0000" stroke-width="1.1" stroke-linecap="round"/><rect x=".5" y="9.5" width="7.2" height="7.5" fill="#fff" stroke="#7888a0" stroke-width="1"/><path d="M2.3 15.2L5.6 11.9" stroke="#000" stroke-width="1.3"/><path d="M3 11.2h3.3v3.3z" fill="#000"/></svg>
<div class="t" style="left:463px;top:161px;line-height:13px;color:#f4f4f4">Event Log January 2020</div>
<svg style="left:594px;top:164px" width="9" height="8" viewBox="0 0 9 8"><path d="M.8 .5l7.4 7M8.2 .5L.8 7.5" stroke="#f0f0f0" stroke-width="1.7"/></svg>
<svg style="left:1905px;top:163px" width="8" height="5" viewBox="0 0 8 5"><path d="M0 0h8L4 4.5z" fill="#8ec4f8"/></svg>
<div class="a" style="left:322px;top:179px;width:1596px;height:2px;background:#454545"></div>
<div class="a" style="left:322px;top:179px;width:1px;height:837px;background:#454545"></div>
<div class="a" style="left:1917px;top:179px;width:1px;height:837px;background:#454545"></div>
<div class="a" style="left:322px;top:1015px;width:1596px;height:1px;background:#454545"></div>
<div class="a" style="left:325px;top:194px;width:8px;height:1px;background:#454545"></div>
<div class="a" style="left:387px;top:194px;width:1501px;height:1px;background:#454545"></div>
<div class="a" style="left:1907px;top:194px;width:8px;height:1px;background:#454545"></div>
<div class="a" style="left:325px;top:194px;width:1px;height:406px;background:#454545"></div>
<div class="a" style="left:1914px;top:194px;width:1px;height:406px;background:#454545"></div>
<div class="a" style="left:325px;top:599px;width:1590px;height:1px;background:#454545"></div>
<div class="t" style="left:336px;top:187px;line-height:13px;color:#f0f0f0">Event log</div>
<svg style="left:1893px;top:190px" width="10" height="7" viewBox="0 0 10 7"><path d="M1 6l4-4 4 4" fill="none" stroke="#fff" stroke-width="2"/></svg>
<div class="a" style="left:332px;top:209px;width:52px;height:24px;background:#3f8a30"></div>
<svg style="left:337px;top:213px" width="16" height="16" viewBox="0 0 16 16"><path d="M8 1v14M1 8h14" stroke="#fff" stroke-width="2.4"/></svg>
<div class="t" style="left:357px;top:215px;line-height:13px;color:#f6f6f6">Add</div>
<svg style="left:389px;top:213px" width="16" height="16" viewBox="0 0 16 16"><use href="#pencil" width="16" height="16"/></svg>
<div class="t td" style="left:409px;top:215px;line-height:13px">Edit</div>
<svg style="left:440px;top:213px" width="14" height="16" viewBox="0 0 14 16"><use href="#trash" width="14" height="16"/></svg>
<div class="t tb" style="left:459px;top:215px;line-height:13px">Delete</div>
<svg style="left:503px;top:215px" width="15" height="11" viewBox="0 0 15 11"><g fill="#2c64b0"><rect x="0" y="0" width="4" height="3"/><rect x="5.5" y="0" width="4" height="3"/><rect x="11" y="0" width="4" height="3"/><rect x="0" y="4" width="4" height="3"/><rect x="5.5" y="4" width="4" height="3"/><rect x="11" y="4" width="4" height="3"/><rect x="0" y="8" width="4" height="3"/><rect x="5.5" y="8" width="4" height="3"/><rect x="11" y="8" width="4" height="3"/></g></svg>
<div class="t tb" style="left:522px;top:215px;line-height:13px">Select All</div>
<svg style="left:580px;top:213px" width="15" height="16" viewBox="0 0 15 16"><path d="M0 1h15l-5.5 6v7.5l-3 1.5V7z" fill="#eee"/><path d="M6.5 7v9l3-1.5V7z" fill="#2a2a2a"/><path d="M2 2h11l-3.5 4h-4z" fill="#bbb"/></svg>
<div class="t tb" style="left:600px;top:215px;line-height:13px">Edit filter</div>
<div class="a" style="left:655px;top:210px;width:1px;height:22px;background:#3c3c3c"></div>
<svg style="left:665px;top:214px" width="15" height="15" viewBox="0 0 15 15"><use href="#refresh" width="15" height="15"/></svg>
<div class="t tb" style="left:684px;top:215px;line-height:13px">Refresh</div>
<svg style="left:734px;top:213px" width="14" height="16" viewBox="0 0 14 16"><path d="M1 3v6h6z" fill="#b4b4b4"/><path d="M4.2 5.5C6 2.5 9.5 1.5 11.5 3.5c2 2 1.5 6-1.5 10" fill="none" stroke="#b4b4b4" stroke-width="2.2"/></svg>
<div class="t td" style="left:753px;top:215px;line-height:13px">Undelete</div>
<div class="a" style="left:808px;top:210px;width:1px;height:22px;background:#3c3c3c"></div>
<svg style="left:817px;top:213px" width="16" height="16" viewBox="0 0 16 16"><rect x=".5" y="1.5" width="14" height="12" fill="#a0a0a0" stroke="#8a8a8a"/><rect x="2" y="3" width="11" height="2" fill="#c8c8c8"/><path d="M3 7.5h6M3 10h5" stroke="#c8c8c8" stroke-width="1"/><path d="M8 14l6-6 2 2-6 6H8z" fill="#b8b8b8" stroke="#8a8a8a" stroke-width=".6"/></svg>
<div class="t td" style="left:837px;top:215px;line-height:13px">Accept</div>
<svg style="left:884px;top:213px" width="16" height="16" viewBox="0 0 16 16"><circle cx="8" cy="8" r="8" fill="#a6a6a6"/><rect x="4" y="7" width="8" height="2.2" fill="#d8d8d8"/></svg>
<div class="t td" style="left:904px;top:215px;line-height:13px">Reject</div>
<div class="a" style="left:944px;top:210px;width:1px;height:22px;background:#3c3c3c"></div>
<svg style="left:952px;top:213px" width="18" height="17" viewBox="0 0 18 17"><g fill="#4f9a80"><rect x="1" y="1" width="4" height="3"/><rect x="6" y="1" width="4" height="3"/><rect x="11" y="1" width="4" height="3"/></g><g fill="#484848"><rect x="1" y="5" width="4" height="3"/><rect x="1" y="9" width="4" height="3"/><rect x="6" y="5" width="2" height="2"/></g><path d="M9.8 9V5.5h4.6V9" fill="none" stroke="#404040" stroke-width="1.2"/><path d="M6 9h11v7h-3v-2.5H9V16H6z" fill="#404040"/><rect x="9" y="13.5" width="5" height="3.2" fill="none" stroke="#404040" stroke-width="1"/><rect x="10" y="14.5" width="3" height="1.3" fill="#7a7a7a"/></svg>
<div class="t tb" style="left:973px;top:215px;line-height:13px">Report</div>
<svg style="left:1802px;top:213px" width="16" height="16" viewBox="0 0 16 16"><rect x=".5" y=".5" width="15" height="15" fill="#6a6a6a" stroke="#333" stroke-width="1"/><rect x="2" y="2" width="3.2" height="12" fill="#2c64b0"/><rect x="6.4" y="2" width="3.2" height="12" fill="#2c64b0"/><rect x="10.8" y="2" width="3.2" height="12" fill="#2c64b0"/></svg>
<svg style="left:1829px;top:214px" width="16" height="16" viewBox="0 0 16 16"><rect x=".5" y=".5" width="13" height="13" fill="none" stroke="#a0a0a0" stroke-width="1"/><rect x="2" y="2" width="2.6" height="10" fill="#a8a8a8"/><rect x="5.7" y="2" width="2.6" height="10" fill="#a8a8a8"/><rect x="9.4" y="2" width="2.6" height="10" fill="#a8a8a8"/><circle cx="11.2" cy="11" r="3" fill="#fff"/><path d="M8 9.5l2 1.5" stroke="#777" stroke-width="1"/></svg>
<svg style="left:1854px;top:213px" width="16" height="16" viewBox="0 0 16 16"><path d="M1 1h14v14H1z" fill="none" stroke="#a0a0a0" stroke-width="2"/><rect x="4.5" y="1" width="7" height="4.5" fill="none" stroke="#a0a0a0" stroke-width="1.6"/><rect x="2" y="9" width="12" height="1.6" fill="#a0a0a0"/></svg>
<div class="a" style="left:1878px;top:210px;width:1px;height:22px;background:#3c3c3c"></div>
<svg style="left:1888px;top:214px" width="14" height="16" viewBox="0 0 14 16"><use href="#help" width="14" height="16"/></svg>
<div class="a" style="left:330px;top:235px;width:1580px;height:1px;background:#474747"></div>
<div class="a" style="left:330px;top:235px;width:1px;height:335px;background:#474747"></div>
<div class="a" style="left:1909px;top:235px;width:1px;height:335px;background:#474747"></div>
<div class="a" style="left:330px;top:569px;width:1580px;height:1px;background:#474747"></div>
<div class="a" style="left:331px;top:236px;width:1578px;height:19px;background:linear-gradient(#b9b9b9,#b1b1b1)"></div>
<div class="a" style="left:331px;top:255px;width:1578px;height:1px;background:#474747"></div>
<div class="a" style="left:331px;top:256px;width:1561px;height:21px;background:#d9d9d9"></div>
<div class="a" style="left:331px;top:277px;width:1561px;height:1px;background:#474747"></div>
<div class="a" style="left:331px;top:236px;width:18px;height:333px;background:#b4b4b4"></div>
<div class="a" style="left:331px;top:236px;width:1px;height:333px;background:#c4c4c4"></div>
<div class="a" style="left:330px;top:255px;width:20px;height:1px;background:#474747"></div>
<div class="a" style="left:330px;top:277px;width:20px;height:1px;background:#474747"></div>
<div class="a" style="left:349px;top:236px;width:1px;height:333px;background:#474747"></div>
<div class="a" style="left:369px;top:236px;width:1px;height:20px;background:#474747"></div>
<div class="a" style="left:489px;top:236px;width:1px;height:20px;background:#474747"></div>
<div class="a" style="left:683px;top:236px;width:1px;height:20px;background:#474747"></div>
<div class="a" style="left:877px;top:236px;width:1px;height:20px;background:#474747"></div>
<div class="a" style="left:937px;top:236px;width:1px;height:20px;background:#474747"></div>
<div class="a" style="left:1131px;top:236px;width:1px;height:20px;background:#474747"></div>
<div class="a" style="left:1325px;top:236px;width:1px;height:20px;background:#474747"></div>
<div class="a" style="left:1385px;top:236px;width:1px;height:20px;background:#474747"></div>
<div class="a" style="left:1579px;top:236px;width:1px;height:20px;background:#474747"></div>
<div class="a" style="left:1639px;top:236px;width:1px;height:20px;background:#474747"></div>
<div class="a" style="left:1699px;top:236px;width:1px;height:20px;background:#474747"></div>
<div class="a" style="left:1892px;top:236px;width:1px;height:20px;background:#474747"></div>
<div class="a" style="left:1892px;top:236px;width:1px;height:20px;background:#474747"></div>
<div class="a" style="left:369px;top:256px;width:1px;height:21px;background:#b2b2b2"></div>
<div class="a" style="left:489px;top:256px;width:1px;height:21px;background:#b2b2b2"></div>
<div class="a" style="left:683px;top:256px;width:1px;height:21px;background:#b2b2b2"></div>
<div class="a" style="left:877px;top:256px;width:1px;height:21px;background:#b2b2b2"></div>
<div class="a" style="left:937px;top:256px;width:1px;height:21px;background:#b2b2b2"></div>
<div class="a" style="left:1131px;top:256px;width:1px;height:21px;background:#b2b2b2"></div>
<div class="a" style="left:1325px;top:256px;width:1px;height:21px;background:#b2b2b2"></div>
<div class="a" style="left:1385px;top:256px;width:1px;height:21px;background:#b2b2b2"></div>
<div class="a" style="left:1579px;top:256px;width:1px;height:21px;background:#b2b2b2"></div>
<div class="a" style="left:1639px;top:256px;width:1px;height:21px;background:#b2b2b2"></div>
<div class="a" style="left:1699px;top:256px;width:1px;height:21px;background:#b2b2b2"></div>

<div class="t hd" style="left:397px;top:239px;line-height:13px">Logged on</div>
<div class="t hd" style="left:489px;top:239px;width:194px;text-align:center">First name</div>
<div class="t hd" style="left:683px;top:239px;width:194px;text-align:center">Last name</div>
<div class="t hd" style="left:877px;top:239px;width:60px;text-align:center">T&amp;&amp;A ID</div>
<div class="t hd" style="left:937px;top:239px;width:194px;text-align:center">Group</div>
<div class="t hd" style="left:1131px;top:239px;width:194px;text-align:center">Terminal</div>
<div class="t hd" style="left:1325px;top:239px;width:60px;text-align:center">Code</div>
<div class="t hd" style="left:1385px;top:239px;width:194px;text-align:center">T&amp;&amp;A Mode</div>
<div class="t hd" style="left:1579px;top:239px;width:60px;text-align:center">Added</div>
<div class="t hd" style="left:1639px;top:239px;width:60px;text-align:center">Deleted</div>
<div class="t hd" style="left:1699px;top:239px;width:193px;text-align:center">Status</div>
<svg style="left:476px;top:244px" width="9" height="5" viewBox="0 0 9 5"><path d="M0 5L4.5 0 9 5z" fill="#3a3a3a"/></svg>
<svg style="left:337px;top:263px" width="8" height="8" viewBox="0 0 8 8"><circle cx="3" cy="3" r="2.2" fill="none" stroke="#444" stroke-width="1.3"/><path d="M4.5 4.5L7.5 7.5" stroke="#444" stroke-width="1.5"/></svg>
<div class="a" style="left:378px;top:265px;width:9px;height:1px;background:#2a2a2a"></div>
<div class="a" style="left:378px;top:268px;width:9px;height:1px;background:#2a2a2a"></div>
<div class="t se" style="left:394px;top:260px;line-height:13px">Search...</div>
<svg style="left:495px;top:261px" width="16" height="11" viewBox="0 0 16 11"><use href="#abc" width="16" height="11"/></svg>
<div class="t se" style="left:514px;top:260px;line-height:13px">Search...</div>
<svg style="left:689px;top:261px" width="16" height="11" viewBox="0 0 16 11"><use href="#abc" width="16" height="11"/></svg>
<div class="t se" style="left:708px;top:260px;line-height:13px">Search...</div>
<svg style="left:883px;top:261px" width="16" height="11" viewBox="0 0 16 11"><use href="#abc" width="16" height="11"/></svg>
<div class="t se" style="left:902px;top:260px;line-height:13px">Sea...</div>
<div class="a" style="left:946px;top:265px;width:9px;height:1px;background:#2a2a2a"></div>
<div class="a" style="left:946px;top:268px;width:9px;height:1px;background:#2a2a2a"></div>
<div class="t se" style="left:962px;top:260px;line-height:13px">Search...</div>
<svg style="left:1137px;top:261px" width="16" height="11" viewBox="0 0 16 11"><use href="#abc" width="16" height="11"/></svg>
<div class="t se" style="left:1156px;top:260px;line-height:13px">Search...</div>
<svg style="left:1331px;top:261px" width="16" height="11" viewBox="0 0 16 11"><use href="#abc" width="16" height="11"/></svg>
<div class="t se" style="left:1350px;top:260px;line-height:13px">Sea...</div>
<svg style="left:1391px;top:261px" width="16" height="11" viewBox="0 0 16 11"><use href="#abc" width="16" height="11"/></svg>
<div class="t se" style="left:1410px;top:260px;line-height:13px">Search...</div>
<svg style="left:1603px;top:259px" width="13" height="13" viewBox="0 0 13 13"><use href="#chki" width="13" height="13"/></svg>
<svg style="left:1663px;top:259px" width="13" height="13" viewBox="0 0 13 13"><use href="#chki" width="13" height="13"/></svg>
<svg style="left:1705px;top:261px" width="16" height="11" viewBox="0 0 16 11"><use href="#abc" width="16" height="11"/></svg>
<div class="t se" style="left:1724px;top:260px;line-height:13px">Search...</div>
<div class="a" style="left:350px;top:278px;width:1542px;height:20px;background:#dcdcdc"></div>
<div class="a" style="left:350px;top:298px;width:1542px;height:1px;background:#b2b2b2"></div>
<div class="a" style="left:369px;top:278px;width:1px;height:20px;background:#b2b2b2"></div>
<div class="a" style="left:489px;top:278px;width:1px;height:20px;background:#b2b2b2"></div>
<div class="a" style="left:683px;top:278px;width:1px;height:20px;background:#b2b2b2"></div>
<div class="a" style="left:877px;top:278px;width:1px;height:20px;background:#b2b2b2"></div>
<div class="a" style="left:937px;top:278px;width:1px;height:20px;background:#b2b2b2"></div>
<div class="a" style="left:1131px;top:278px;width:1px;height:20px;background:#b2b2b2"></div>
<div class="a" style="left:1325px;top:278px;width:1px;height:20px;background:#b2b2b2"></div>
<div class="a" style="left:1385px;top:278px;width:1px;height:20px;background:#b2b2b2"></div>
<div class="a" style="left:1579px;top:278px;width:1px;height:20px;background:#b2b2b2"></div>
<div class="a" style="left:1639px;top:278px;width:1px;height:20px;background:#b2b2b2"></div>
<div class="a" style="left:1699px;top:278px;width:1px;height:20px;background:#b2b2b2"></div>
<div class="t ce" style="left:374px;top:282px;line-height:13px">2020-01-02 05:50:00</div>
<div class="t ce" style="left:494px;top:282px;line-height:13px">Thorvald</div>
<div class="t ce" style="left:688px;top:282px;line-height:13px">Buckner</div>
<div class="t ce" style="left:882px;top:282px;line-height:13px">005</div>
<div class="t ce" style="left:942px;top:282px;line-height:13px">Team I</div>
<div class="t ce" style="left:1136px;top:282px;line-height:13px">Production floor entry</div>
<div class="t ce" style="left:1330px;top:282px;line-height:13px">0</div>
<div class="t ce" style="left:1390px;top:282px;line-height:13px">T&amp;A - Entry</div>
<svg style="left:1603px;top:281px" width="13" height="13" viewBox="0 0 13 13"><use href="#chk" width="13" height="13"/></svg>
<svg style="left:1663px;top:281px" width="13" height="13" viewBox="0 0 13 13"><use href="#chk" width="13" height="13"/></svg>
<div class="t ce" style="left:1703px;top:282px;line-height:13px">None</div>
<div class="a" style="left:350px;top:299px;width:1542px;height:20px;background:#cbcbcb"></div>
<div class="a" style="left:350px;top:319px;width:1542px;height:1px;background:#b2b2b2"></div>
<div class="a" style="left:369px;top:299px;width:1px;height:20px;background:#b2b2b2"></div>
<div class="a" style="left:489px;top:299px;width:1px;height:20px;background:#b2b2b2"></div>
<div class="a" style="left:683px;top:299px;width:1px;height:20px;background:#b2b2b2"></div>
<div class="a" style="left:877px;top:299px;width:1px;height:20px;background:#b2b2b2"></div>
<div class="a" style="left:937px;top:299px;width:1px;height:20px;background:#b2b2b2"></div>
<div class="a" style="left:1131px;top:299px;width:1px;height:20px;background:#b2b2b2"></div>
<div class="a" style="left:1325px;top:299px;width:1px;height:20px;background:#b2b2b2"></div>
<div class="a" style="left:1385px;top:299px;width:1px;height:20px;background:#b2b2b2"></div>
<div class="a" style="left:1579px;top:299px;width:1px;height:20px;background:#b2b2b2"></div>
<div class="a" style="left:1639px;top:299px;width:1px;height:20px;background:#b2b2b2"></div>
<div class="a" style="left:1699px;top:299px;width:1px;height:20px;background:#b2b2b2"></div>
<div class="t ce" style="left:374px;top:303px;line-height:13px">2020-01-02 06:00:00</div>
<div class="t ce" style="left:494px;top:303px;line-height:13px">Anastatio</div>
<div class="t ce" style="left:688px;top:303px;line-height:13px">Arispe</div>
<div class="t ce" style="left:882px;top:303px;line-height:13px">004</div>
<div class="t ce" style="left:942px;top:303px;line-height:13px">Team I</div>
<div class="t ce" style="left:1136px;top:303px;line-height:13px">Production floor entry</div>
<div class="t ce" style="left:1330px;top:303px;line-height:13px">0</div>
<div class="t ce" style="left:1390px;top:303px;line-height:13px">T&amp;A - Entry</div>
<svg style="left:1603px;top:302px" width="13" height="13" viewBox="0 0 13 13"><use href="#chk" width="13" height="13"/></svg>
<svg style="left:1663px;top:302px" width="13" height="13" viewBox="0 0 13 13"><use href="#chk" width="13" height="13"/></svg>
<div class="t ce" style="left:1703px;top:303px;line-height:13px">None</div>
<div class="a" style="left:350px;top:320px;width:1542px;height:20px;background:#dcdcdc"></div>
<div class="a" style="left:350px;top:340px;width:1542px;height:1px;background:#b2b2b2"></div>
<div class="a" style="left:369px;top:320px;width:1px;height:20px;background:#b2b2b2"></div>
<div class="a" style="left:489px;top:320px;width:1px;height:20px;background:#b2b2b2"></div>
<div class="a" style="left:683px;top:320px;width:1px;height:20px;background:#b2b2b2"></div>
<div class="a" style="left:877px;top:320px;width:1px;height:20px;background:#b2b2b2"></div>
<div class="a" style="left:937px;top:320px;width:1px;height:20px;background:#b2b2b2"></div>
<div class="a" style="left:1131px;top:320px;width:1px;height:20px;background:#b2b2b2"></div>
<div class="a" style="left:1325px;top:320px;width:1px;height:20px;background:#b2b2b2"></div>
<div class="a" style="left:1385px;top:320px;width:1px;height:20px;background:#b2b2b2"></div>
<div class="a" style="left:1579px;top:320px;width:1px;height:20px;background:#b2b2b2"></div>
<div class="a" style="left:1639px;top:320px;width:1px;height:20px;background:#b2b2b2"></div>
<div class="a" style="left:1699px;top:320px;width:1px;height:20px;background:#b2b2b2"></div>
<div class="t ce" style="left:374px;top:324px;line-height:13px">2020-01-02 06:00:00</div>
<div class="t ce" style="left:494px;top:324px;line-height:13px">Lucinde</div>
<div class="t ce" style="left:688px;top:324px;line-height:13px">Chevere</div>
<div class="t ce" style="left:882px;top:324px;line-height:13px">007</div>
<div class="t ce" style="left:942px;top:324px;line-height:13px">Team II</div>
<div class="t ce" style="left:1136px;top:324px;line-height:13px">Production floor entry</div>
<div class="t ce" style="left:1330px;top:324px;line-height:13px">0</div>
<div class="t ce" style="left:1390px;top:324px;line-height:13px">T&amp;A - Entry</div>
<svg style="left:1603px;top:323px" width="13" height="13" viewBox="0 0 13 13"><use href="#chk" width="13" height="13"/></svg>
<svg style="left:1663px;top:323px" width="13" height="13" viewBox="0 0 13 13"><use href="#chk" width="13" height="13"/></svg>
<div class="t ce" style="left:1703px;top:324px;line-height:13px">None</div>
<div class="a" style="left:350px;top:341px;width:1542px;height:20px;background:#cbcbcb"></div>
<div class="a" style="left:350px;top:361px;width:1542px;height:1px;background:#b2b2b2"></div>
<div class="a" style="left:369px;top:341px;width:1px;height:20px;background:#b2b2b2"></div>
<div class="a" style="left:489px;top:341px;width:1px;height:20px;background:#b2b2b2"></div>
<div class="a" style="left:683px;top:341px;width:1px;height:20px;background:#b2b2b2"></div>
<div class="a" style="left:877px;top:341px;width:1px;height:20px;background:#b2b2b2"></div>
<div class="a" style="left:937px;top:341px;width:1px;height:20px;background:#b2b2b2"></div>
<div class="a" style="left:1131px;top:341px;width:1px;height:20px;background:#b2b2b2"></div>
<div class="a" style="left:1325px;top:341px;width:1px;height:20px;background:#b2b2b2"></div>
<div class="a" style="left:1385px;top:341px;width:1px;height:20px;background:#b2b2b2"></div>
<div class="a" style="left:1579px;top:341px;width:1px;height:20px;background:#b2b2b2"></div>
<div class="a" style="left:1639px;top:341px;width:1px;height:20px;background:#b2b2b2"></div>
<div class="a" style="left:1699px;top:341px;width:1px;height:20px;background:#b2b2b2"></div>
<div class="t ce" style="left:374px;top:345px;line-height:13px">2020-01-02 06:55:00</div>
<div class="t ce" style="left:494px;top:345px;line-height:13px">Herbert</div>
<div class="t ce" style="left:688px;top:345px;line-height:13px">Gerstner</div>
<div class="t ce" style="left:882px;top:345px;line-height:13px">002</div>
<div class="t ce" style="left:942px;top:345px;line-height:13px">Administration</div>
<div class="t ce" style="left:1136px;top:345px;line-height:13px">Office entry</div>
<div class="t ce" style="left:1330px;top:345px;line-height:13px">0</div>
<div class="t ce" style="left:1390px;top:345px;line-height:13px">T&amp;A - Entry</div>
<svg style="left:1603px;top:344px" width="13" height="13" viewBox="0 0 13 13"><use href="#chk" width="13" height="13"/></svg>
<svg style="left:1663px;top:344px" width="13" height="13" viewBox="0 0 13 13"><use href="#chk" width="13" height="13"/></svg>
<div class="t ce" style="left:1703px;top:345px;line-height:13px">None</div>
<div class="a" style="left:350px;top:362px;width:1542px;height:20px;background:#bdbdbd"></div>
<div class="a" style="left:350px;top:382px;width:1542px;height:1px;background:#b2b2b2"></div>
<div class="a" style="left:369px;top:362px;width:1px;height:20px;background:#b2b2b2"></div>
<div class="a" style="left:489px;top:362px;width:1px;height:20px;background:#b2b2b2"></div>
<div class="a" style="left:683px;top:362px;width:1px;height:20px;background:#b2b2b2"></div>
<div class="a" style="left:877px;top:362px;width:1px;height:20px;background:#b2b2b2"></div>
<div class="a" style="left:937px;top:362px;width:1px;height:20px;background:#b2b2b2"></div>
<div class="a" style="left:1131px;top:362px;width:1px;height:20px;background:#b2b2b2"></div>
<div class="a" style="left:1325px;top:362px;width:1px;height:20px;background:#b2b2b2"></div>
<div class="a" style="left:1385px;top:362px;width:1px;height:20px;background:#b2b2b2"></div>
<div class="a" style="left:1579px;top:362px;width:1px;height:20px;background:#b2b2b2"></div>
<div class="a" style="left:1639px;top:362px;width:1px;height:20px;background:#b2b2b2"></div>
<div class="a" style="left:1699px;top:362px;width:1px;height:20px;background:#b2b2b2"></div>
<div class="t ce" style="left:374px;top:366px;line-height:13px">2020-01-02 06:55:00</div>
<div class="t ce" style="left:494px;top:366px;line-height:13px">Allison</div>
<div class="t ce" style="left:688px;top:366px;line-height:13px">Huffman</div>
<div class="t ce" style="left:882px;top:366px;line-height:13px">008</div>
<div class="t ce" style="left:942px;top:366px;line-height:13px">Team III</div>
<div class="t ce" style="left:1136px;top:366px;line-height:13px">Production floor entry</div>
<div class="t ce" style="left:1330px;top:366px;line-height:13px">0</div>
<div class="t ce" style="left:1390px;top:366px;line-height:13px">T&amp;A - Entry</div>
<svg style="left:1603px;top:365px" width="13" height="13" viewBox="0 0 13 13"><use href="#chk" width="13" height="13"/></svg>
<svg style="left:1663px;top:365px" width="13" height="13" viewBox="0 0 13 13"><use href="#chk" width="13" height="13"/></svg>
<div class="t ce" style="left:1703px;top:366px;line-height:13px">None</div>
<div class="a" style="left:350px;top:383px;width:1542px;height:20px;background:#cbcbcb"></div>
<div class="a" style="left:350px;top:403px;width:1542px;height:1px;background:#b2b2b2"></div>
<div class="a" style="left:369px;top:383px;width:1px;height:20px;background:#b2b2b2"></div>
<div class="a" style="left:489px;top:383px;width:1px;height:20px;background:#b2b2b2"></div>
<div class="a" style="left:683px;top:383px;width:1px;height:20px;background:#b2b2b2"></div>
<div class="a" style="left:877px;top:383px;width:1px;height:20px;background:#b2b2b2"></div>
<div class="a" style="left:937px;top:383px;width:1px;height:20px;background:#b2b2b2"></div>
<div class="a" style="left:1131px;top:383px;width:1px;height:20px;background:#b2b2b2"></div>
<div class="a" style="left:1325px;top:383px;width:1px;height:20px;background:#b2b2b2"></div>
<div class="a" style="left:1385px;top:383px;width:1px;height:20px;background:#b2b2b2"></div>
<div class="a" style="left:1579px;top:383px;width:1px;height:20px;background:#b2b2b2"></div>
<div class="a" style="left:1639px;top:383px;width:1px;height:20px;background:#b2b2b2"></div>
<div class="a" style="left:1699px;top:383px;width:1px;height:20px;background:#b2b2b2"></div>
<div class="t ce" style="left:374px;top:387px;line-height:13px">2020-01-02 06:55:00</div>
<div class="t ce" style="left:494px;top:387px;line-height:13px">Cathryn</div>
<div class="t ce" style="left:688px;top:387px;line-height:13px">Middle</div>
<div class="t ce" style="left:882px;top:387px;line-height:13px">456</div>
<div class="t ce" style="left:942px;top:387px;line-height:13px">Design Team</div>
<div class="t ce" style="left:1136px;top:387px;line-height:13px">Production floor entry</div>
<div class="t ce" style="left:1330px;top:387px;line-height:13px">0</div>
<div class="t ce" style="left:1390px;top:387px;line-height:13px">T&amp;A - Entry</div>
<svg style="left:1603px;top:386px" width="13" height="13" viewBox="0 0 13 13"><use href="#chk" width="13" height="13"/></svg>
<svg style="left:1663px;top:386px" width="13" height="13" viewBox="0 0 13 13"><use href="#chk" width="13" height="13"/></svg>
<div class="t ce" style="left:1703px;top:387px;line-height:13px">None</div>
<div class="a" style="left:350px;top:404px;width:1542px;height:20px;background:#dcdcdc"></div>
<div class="a" style="left:350px;top:424px;width:1542px;height:1px;background:#b2b2b2"></div>
<div class="a" style="left:369px;top:404px;width:1px;height:20px;background:#b2b2b2"></div>
<div class="a" style="left:489px;top:404px;width:1px;height:20px;background:#b2b2b2"></div>
<div class="a" style="left:683px;top:404px;width:1px;height:20px;background:#b2b2b2"></div>
<div class="a" style="left:877px;top:404px;width:1px;height:20px;background:#b2b2b2"></div>
<div class="a" style="left:937px;top:404px;width:1px;height:20px;background:#b2b2b2"></div>
<div class="a" style="left:1131px;top:404px;width:1px;height:20px;background:#b2b2b2"></div>
<div class="a" style="left:1325px;top:404px;width:1px;height:20px;background:#b2b2b2"></div>
<div class="a" style="left:1385px;top:404px;width:1px;height:20px;background:#b2b2b2"></div>
<div class="a" style="left:1579px;top:404px;width:1px;height:20px;background:#b2b2b2"></div>
<div class="a" style="left:1639px;top:404px;width:1px;height:20px;background:#b2b2b2"></div>
<div class="a" style="left:1699px;top:404px;width:1px;height:20px;background:#b2b2b2"></div>
<div class="t ce" style="left:374px;top:408px;line-height:13px">2020-01-02 06:58:00</div>
<div class="t ce" style="left:494px;top:408px;line-height:13px">Branden</div>
<div class="t ce" style="left:688px;top:408px;line-height:13px">Mckay</div>
<div class="t ce" style="left:882px;top:408px;line-height:13px">003</div>
<div class="t ce" style="left:942px;top:408px;line-height:13px">Administration</div>
<div class="t ce" style="left:1136px;top:408px;line-height:13px">Office entry</div>
<div class="t ce" style="left:1330px;top:408px;line-height:13px">0</div>
<div class="t ce" style="left:1390px;top:408px;line-height:13px">T&amp;A - Entry</div>
<svg style="left:1603px;top:407px" width="13" height="13" viewBox="0 0 13 13"><use href="#chk" width="13" height="13"/></svg>
<svg style="left:1663px;top:407px" width="13" height="13" viewBox="0 0 13 13"><use href="#chk" width="13" height="13"/></svg>
<div class="t ce" style="left:1703px;top:408px;line-height:13px">None</div>
<div class="a" style="left:350px;top:425px;width:1542px;height:20px;background:#cbcbcb"></div>
<div class="a" style="left:350px;top:445px;width:1542px;height:1px;background:#b2b2b2"></div>
<div class="a" style="left:369px;top:425px;width:1px;height:20px;background:#b2b2b2"></div>
<div class="a" style="left:489px;top:425px;width:1px;height:20px;background:#b2b2b2"></div>
<div class="a" style="left:683px;top:425px;width:1px;height:20px;background:#b2b2b2"></div>
<div class="a" style="left:877px;top:425px;width:1px;height:20px;background:#b2b2b2"></div>
<div class="a" style="left:937px;top:425px;width:1px;height:20px;background:#b2b2b2"></div>
<div class="a" style="left:1131px;top:425px;width:1px;height:20px;background:#b2b2b2"></div>
<div class="a" style="left:1325px;top:425px;width:1px;height:20px;background:#b2b2b2"></div>
<div class="a" style="left:1385px;top:425px;width:1px;height:20px;background:#b2b2b2"></div>
<div class="a" style="left:1579px;top:425px;width:1px;height:20px;background:#b2b2b2"></div>
<div class="a" style="left:1639px;top:425px;width:1px;height:20px;background:#b2b2b2"></div>
<div class="a" style="left:1699px;top:425px;width:1px;height:20px;background:#b2b2b2"></div>
<div class="t ce" style="left:374px;top:429px;line-height:13px">2020-01-02 07:00:00</div>
<div class="t ce" style="left:494px;top:429px;line-height:13px">Imelda</div>
<div class="t ce" style="left:688px;top:429px;line-height:13px">Saenz</div>
<div class="t ce" style="left:882px;top:429px;line-height:13px">009</div>
<div class="t ce" style="left:942px;top:429px;line-height:13px">Team III</div>
<div class="t ce" style="left:1136px;top:429px;line-height:13px">Production floor entry</div>
<div class="t ce" style="left:1330px;top:429px;line-height:13px">0</div>
<div class="t ce" style="left:1390px;top:429px;line-height:13px">T&amp;A - Entry</div>
<svg style="left:1603px;top:428px" width="13" height="13" viewBox="0 0 13 13"><use href="#chk" width="13" height="13"/></svg>
<svg style="left:1663px;top:428px" width="13" height="13" viewBox="0 0 13 13"><use href="#chk" width="13" height="13"/></svg>
<div class="t ce" style="left:1703px;top:429px;line-height:13px">None</div>
<div class="a" style="left:350px;top:446px;width:1542px;height:20px;background:#dcdcdc"></div>
<div class="a" style="left:350px;top:466px;width:1542px;height:1px;background:#b2b2b2"></div>
<div class="a" style="left:369px;top:446px;width:1px;height:20px;background:#b2b2b2"></div>
<div class="a" style="left:489px;top:446px;width:1px;height:20px;background:#b2b2b2"></div>
<div class="a" style="left:683px;top:446px;width:1px;height:20px;background:#b2b2b2"></div>
<div class="a" style="left:877px;top:446px;width:1px;height:20px;background:#b2b2b2"></div>
<div class="a" style="left:937px;top:446px;width:1px;height:20px;background:#b2b2b2"></div>
<div class="a" style="left:1131px;top:446px;width:1px;height:20px;background:#b2b2b2"></div>
<div class="a" style="left:1325px;top:446px;width:1px;height:20px;background:#b2b2b2"></div>
<div class="a" style="left:1385px;top:446px;width:1px;height:20px;background:#b2b2b2"></div>
<div class="a" style="left:1579px;top:446px;width:1px;height:20px;background:#b2b2b2"></div>
<div class="a" style="left:1639px;top:446px;width:1px;height:20px;background:#b2b2b2"></div>
<div class="a" style="left:1699px;top:446px;width:1px;height:20px;background:#b2b2b2"></div>
<div class="t ce" style="left:374px;top:450px;line-height:13px">2020-01-02 07:30:00</div>
<div class="t ce" style="left:494px;top:450px;line-height:13px">Davis</div>
<div class="t ce" style="left:688px;top:450px;line-height:13px">Berkeley</div>
<div class="t ce" style="left:882px;top:450px;line-height:13px">111</div>
<div class="t ce" style="left:942px;top:450px;line-height:13px">Design Team</div>
<div class="t ce" style="left:1136px;top:450px;line-height:13px">Office entry</div>
<div class="t ce" style="left:1330px;top:450px;line-height:13px">0</div>
<div class="t ce" style="left:1390px;top:450px;line-height:13px">T&amp;A - Entry</div>
<svg style="left:1603px;top:449px" width="13" height="13" viewBox="0 0 13 13"><use href="#chk" width="13" height="13"/></svg>
<svg style="left:1663px;top:449px" width="13" height="13" viewBox="0 0 13 13"><use href="#chk" width="13" height="13"/></svg>
<div class="t ce" style="left:1703px;top:450px;line-height:13px">None</div>
<div class="a" style="left:350px;top:467px;width:1542px;height:20px;background:#cbcbcb"></div>
<div class="a" style="left:350px;top:487px;width:1542px;height:1px;background:#b2b2b2"></div>
<div class="a" style="left:369px;top:467px;width:1px;height:20px;background:#b2b2b2"></div>
<div class="a" style="left:489px;top:467px;width:1px;height:20px;background:#b2b2b2"></div>
<div class="a" style="left:683px;top:467px;width:1px;height:20px;background:#b2b2b2"></div>
<div class="a" style="left:877px;top:467px;width:1px;height:20px;background:#b2b2b2"></div>
<div class="a" style="left:937px;top:467px;width:1px;height:20px;background:#b2b2b2"></div>
<div class="a" style="left:1131px;top:467px;width:1px;height:20px;background:#b2b2b2"></div>
<div class="a" style="left:1325px;top:467px;width:1px;height:20px;background:#b2b2b2"></div>
<div class="a" style="left:1385px;top:467px;width:1px;height:20px;background:#b2b2b2"></div>
<div class="a" style="left:1579px;top:467px;width:1px;height:20px;background:#b2b2b2"></div>
<div class="a" style="left:1639px;top:467px;width:1px;height:20px;background:#b2b2b2"></div>
<div class="a" style="left:1699px;top:467px;width:1px;height:20px;background:#b2b2b2"></div>
<div class="t ce" style="left:374px;top:471px;line-height:13px">2020-01-02 07:55:00</div>
<div class="t ce" style="left:494px;top:471px;line-height:13px">Eliseo</div>
<div class="t ce" style="left:688px;top:471px;line-height:13px">Bonds</div>
<div class="t ce" style="left:882px;top:471px;line-height:13px">010</div>
<div class="t ce" style="left:942px;top:471px;line-height:13px">Magazine</div>
<div class="t ce" style="left:1136px;top:471px;line-height:13px">Office entry</div>
<div class="t ce" style="left:1330px;top:471px;line-height:13px">0</div>
<div class="t ce" style="left:1390px;top:471px;line-height:13px">T&amp;A - Entry</div>
<svg style="left:1603px;top:470px" width="13" height="13" viewBox="0 0 13 13"><use href="#chk" width="13" height="13"/></svg>
<svg style="left:1663px;top:470px" width="13" height="13" viewBox="0 0 13 13"><use href="#chk" width="13" height="13"/></svg>
<div class="t ce" style="left:1703px;top:471px;line-height:13px">None</div>
<div class="a" style="left:350px;top:488px;width:1542px;height:20px;background:#dcdcdc"></div>
<div class="a" style="left:350px;top:508px;width:1542px;height:1px;background:#b2b2b2"></div>
<div class="a" style="left:369px;top:488px;width:1px;height:20px;background:#b2b2b2"></div>
<div class="a" style="left:489px;top:488px;width:1px;height:20px;background:#b2b2b2"></div>
<div class="a" style="left:683px;top:488px;width:1px;height:20px;background:#b2b2b2"></div>
<div class="a" style="left:877px;top:488px;width:1px;height:20px;background:#b2b2b2"></div>
<div class="a" style="left:937px;top:488px;width:1px;height:20px;background:#b2b2b2"></div>
<div class="a" style="left:1131px;top:488px;width:1px;height:20px;background:#b2b2b2"></div>
<div class="a" style="left:1325px;top:488px;width:1px;height:20px;background:#b2b2b2"></div>
<div class="a" style="left:1385px;top:488px;width:1px;height:20px;background:#b2b2b2"></div>
<div class="a" style="left:1579px;top:488px;width:1px;height:20px;background:#b2b2b2"></div>
<div class="a" style="left:1639px;top:488px;width:1px;height:20px;background:#b2b2b2"></div>
<div class="a" style="left:1699px;top:488px;width:1px;height:20px;background:#b2b2b2"></div>
<div class="t ce" style="left:374px;top:492px;line-height:13px">2020-01-02 07:55:00</div>
<div class="t ce" style="left:494px;top:492px;line-height:13px">Demelza</div>
<div class="t ce" style="left:688px;top:492px;line-height:13px">Corpuz</div>
<div class="t ce" style="left:882px;top:492px;line-height:13px">011</div>
<div class="t ce" style="left:942px;top:492px;line-height:13px">Magazine</div>
<div class="t ce" style="left:1136px;top:492px;line-height:13px">Office entry</div>
<div class="t ce" style="left:1330px;top:492px;line-height:13px">0</div>
<div class="t ce" style="left:1390px;top:492px;line-height:13px">T&amp;A - Entry</div>
<svg style="left:1603px;top:491px" width="13" height="13" viewBox="0 0 13 13"><use href="#chk" width="13" height="13"/></svg>
<svg style="left:1663px;top:491px" width="13" height="13" viewBox="0 0 13 13"><use href="#chk" width="13" height="13"/></svg>
<div class="t ce" style="left:1703px;top:492px;line-height:13px">None</div>
<div class="a" style="left:350px;top:509px;width:1542px;height:20px;background:#cbcbcb"></div>
<div class="a" style="left:350px;top:529px;width:1542px;height:1px;background:#b2b2b2"></div>
<div class="a" style="left:369px;top:509px;width:1px;height:20px;background:#b2b2b2"></div>
<div class="a" style="left:489px;top:509px;width:1px;height:20px;background:#b2b2b2"></div>
<div class="a" style="left:683px;top:509px;width:1px;height:20px;background:#b2b2b2"></div>
<div class="a" style="left:877px;top:509px;width:1px;height:20px;background:#b2b2b2"></div>
<div class="a" style="left:937px;top:509px;width:1px;height:20px;background:#b2b2b2"></div>
<div class="a" style="left:1131px;top:509px;width:1px;height:20px;background:#b2b2b2"></div>
<div class="a" style="left:1325px;top:509px;width:1px;height:20px;background:#b2b2b2"></div>
<div class="a" style="left:1385px;top:509px;width:1px;height:20px;background:#b2b2b2"></div>
<div class="a" style="left:1579px;top:509px;width:1px;height:20px;background:#b2b2b2"></div>
<div class="a" style="left:1639px;top:509px;width:1px;height:20px;background:#b2b2b2"></div>
<div class="a" style="left:1699px;top:509px;width:1px;height:20px;background:#b2b2b2"></div>
<div class="t ce" style="left:374px;top:513px;line-height:13px">2020-01-02 07:55:00</div>
<div class="t ce" style="left:494px;top:513px;line-height:13px">Clark</div>
<div class="t ce" style="left:688px;top:513px;line-height:13px">Winland</div>
<div class="t ce" style="left:882px;top:513px;line-height:13px">100</div>
<div class="t ce" style="left:942px;top:513px;line-height:13px">Magazine</div>
<div class="t ce" style="left:1136px;top:513px;line-height:13px">Office entry</div>
<div class="t ce" style="left:1330px;top:513px;line-height:13px">0</div>
<div class="t ce" style="left:1390px;top:513px;line-height:13px">T&amp;A - Entry</div>
<svg style="left:1603px;top:512px" width="13" height="13" viewBox="0 0 13 13"><use href="#chk" width="13" height="13"/></svg>
<svg style="left:1663px;top:512px" width="13" height="13" viewBox="0 0 13 13"><use href="#chk" width="13" height="13"/></svg>
<div class="t ce" style="left:1703px;top:513px;line-height:13px">None</div>
<div class="a" style="left:350px;top:530px;width:1542px;height:20px;background:#dcdcdc"></div>
<div class="a" style="left:350px;top:550px;width:1542px;height:1px;background:#b2b2b2"></div>
<div class="a" style="left:369px;top:530px;width:1px;height:20px;background:#b2b2b2"></div>
<div class="a" style="left:489px;top:530px;width:1px;height:20px;background:#b2b2b2"></div>
<div class="a" style="left:683px;top:530px;width:1px;height:20px;background:#b2b2b2"></div>
<div class="a" style="left:877px;top:530px;width:1px;height:20px;background:#b2b2b2"></div>
<div class="a" style="left:937px;top:530px;width:1px;height:20px;background:#b2b2b2"></div>
<div class="a" style="left:1131px;top:530px;width:1px;height:20px;background:#b2b2b2"></div>
<div class="a" style="left:1325px;top:530px;width:1px;height:20px;background:#b2b2b2"></div>
<div class="a" style="left:1385px;top:530px;width:1px;height:20px;background:#b2b2b2"></div>
<div class="a" style="left:1579px;top:530px;width:1px;height:20px;background:#b2b2b2"></div>
<div class="a" style="left:1639px;top:530px;width:1px;height:20px;background:#b2b2b2"></div>
<div class="a" style="left:1699px;top:530px;width:1px;height:20px;background:#b2b2b2"></div>
<div class="t ce" style="left:374px;top:534px;line-height:13px">2020-01-02 07:58:00</div>
<div class="t ce" style="left:494px;top:534px;line-height:13px">Ken</div>
<div class="t ce" style="left:688px;top:534px;line-height:13px">Schulman</div>
<div class="t ce" style="left:882px;top:534px;line-height:13px">101</div>
<div class="t ce" style="left:942px;top:534px;line-height:13px">Magazine</div>
<div class="t ce" style="left:1136px;top:534px;line-height:13px">Office entry</div>
<div class="t ce" style="left:1330px;top:534px;line-height:13px">0</div>
<div class="t ce" style="left:1390px;top:534px;line-height:13px">T&amp;A - Entry</div>
<svg style="left:1603px;top:533px" width="13" height="13" viewBox="0 0 13 13"><use href="#chk" width="13" height="13"/></svg>
<svg style="left:1663px;top:533px" width="13" height="13" viewBox="0 0 13 13"><use href="#chk" width="13" height="13"/></svg>
<div class="t ce" style="left:1703px;top:534px;line-height:13px">None</div>
<div class="a" style="left:350px;top:551px;width:1542px;height:18px;background:#cbcbcb"></div>
<div class="a" style="left:369px;top:551px;width:1px;height:18px;background:#b2b2b2"></div>
<div class="a" style="left:489px;top:551px;width:1px;height:18px;background:#b2b2b2"></div>
<div class="a" style="left:683px;top:551px;width:1px;height:18px;background:#b2b2b2"></div>
<div class="a" style="left:877px;top:551px;width:1px;height:18px;background:#b2b2b2"></div>
<div class="a" style="left:937px;top:551px;width:1px;height:18px;background:#b2b2b2"></div>
<div class="a" style="left:1131px;top:551px;width:1px;height:18px;background:#b2b2b2"></div>
<div class="a" style="left:1325px;top:551px;width:1px;height:18px;background:#b2b2b2"></div>
<div class="a" style="left:1385px;top:551px;width:1px;height:18px;background:#b2b2b2"></div>
<div class="a" style="left:1579px;top:551px;width:1px;height:18px;background:#b2b2b2"></div>
<div class="a" style="left:1639px;top:551px;width:1px;height:18px;background:#b2b2b2"></div>
<div class="a" style="left:1699px;top:551px;width:1px;height:18px;background:#b2b2b2"></div>
<div class="t ce" style="left:374px;top:555px;line-height:13px">2020-01-02 08:00:00</div>
<div class="t ce" style="left:494px;top:555px;line-height:13px">Muhannad</div>
<div class="t ce" style="left:688px;top:555px;line-height:13px">Arab</div>
<div class="t ce" style="left:882px;top:555px;line-height:13px">001</div>
<div class="t ce" style="left:942px;top:555px;line-height:13px">Design Team</div>
<div class="t ce" style="left:1136px;top:555px;line-height:13px">Office entry</div>
<div class="t ce" style="left:1330px;top:555px;line-height:13px">0</div>
<div class="t ce" style="left:1390px;top:555px;line-height:13px">T&amp;A - Entry</div>
<svg style="left:1603px;top:554px" width="13" height="13" viewBox="0 0 13 13"><use href="#chk" width="13" height="13"/></svg>
<svg style="left:1663px;top:554px" width="13" height="13" viewBox="0 0 13 13"><use href="#chk" width="13" height="13"/></svg>
<div class="t ce" style="left:1703px;top:555px;line-height:13px">None</div>
<svg style="left:339px;top:369px" width="4" height="8" viewBox="0 0 4 8"><path d="M0 0l4 4-4 4z" fill="#333"/></svg>
<div class="a" style="left:1893px;top:236px;width:16px;height:19px;background:#b4b4b4"></div>
<div class="a" style="left:1892px;top:256px;width:17px;height:313px;background:#b4b4b4"></div>
<div class="a" style="left:1892px;top:273px;width:17px;height:17px;background:#9a9a9a"></div>
<svg style="left:1897px;top:260px" width="8" height="7" viewBox="0 0 8 7"><path d="M.8 6L4 2.2 7.2 6" fill="none" stroke="#3c3c3c" stroke-width="1.8"/></svg>
<svg style="left:1897px;top:558px" width="8" height="7" viewBox="0 0 8 7"><path d="M.8 1L4 4.8 7.2 1" fill="none" stroke="#3c3c3c" stroke-width="1.8"/></svg>
<div class="a" style="left:1725px;top:570px;width:185px;height:25px;background:#444"></div>
<div class="a" style="left:1726px;top:571px;width:183px;height:23px;background:#d6d6d6"></div>
<div class="a" style="left:1726px;top:571px;width:183px;height:1px;background:#e8e8e8"></div>
<div class="a" style="left:1726px;top:571px;width:1px;height:23px;background:#e4e4e4"></div>
<svg style="left:1729px;top:579px" width="10" height="7" viewBox="0 0 10 7"><path d="M0 0h1.1v7H0z M1.2 3.5L5 0v7z M5 3.5L9 0v7z" fill="#333"/></svg>
<svg style="left:1743px;top:579px" width="8" height="7" viewBox="0 0 8 7"><path d="M0 3.5L4 0v7z M4 3.5L8 0v7z" fill="#333"/></svg>
<svg style="left:1759px;top:579px" width="4" height="7" viewBox="0 0 4 7"><path d="M0 3.5L4 0v7z" fill="#333"/></svg>
<div class="t" style="left:1778px;top:577px;line-height:13px;color:#303040">Record 5 of 711</div>
<svg style="left:1873px;top:579px" width="4" height="7" viewBox="0 0 4 7"><path d="M0 0l4 3.5L0 7z" fill="#333"/></svg>
<svg style="left:1885px;top:579px" width="8" height="7" viewBox="0 0 8 7"><path d="M0 0l4 3.5L0 7z M4 0l4 3.5L4 7z" fill="#333"/></svg>
<svg style="left:1899px;top:579px" width="9" height="7" viewBox="0 0 9 7"><path d="M0 0l4 3.5L0 7z M4 0l3.8 3.5L4 7z M7.8 0h1.1v7H7.8z" fill="#333"/></svg>
<div class="a" style="left:325px;top:627px;width:8px;height:1px;background:#454545"></div>
<div class="a" style="left:421px;top:627px;width:1467px;height:1px;background:#454545"></div>
<div class="a" style="left:1907px;top:627px;width:8px;height:1px;background:#454545"></div>
<div class="a" style="left:325px;top:627px;width:1px;height:386px;background:#454545"></div>
<div class="a" style="left:1914px;top:627px;width:1px;height:386px;background:#454545"></div>
<div class="a" style="left:325px;top:1012px;width:1590px;height:1px;background:#454545"></div>
<div class="t" style="left:336px;top:620px;line-height:13px;color:#f0f0f0">Event log details</div>
<svg style="left:1893px;top:623px" width="10" height="7" viewBox="0 0 10 7"><path d="M1 6l4-4 4 4" fill="none" stroke="#fff" stroke-width="2"/></svg>
<div class="a" style="left:328px;top:640px;width:56px;height:1px;background:#454545"></div>
<div class="a" style="left:328px;top:640px;width:1px;height:370px;background:#454545"></div>
<div class="a" style="left:383px;top:640px;width:1px;height:22px;background:#454545"></div>
<div class="a" style="left:383px;top:661px;width:1529px;height:1px;background:#454545"></div>
<div class="a" style="left:1911px;top:661px;width:1px;height:349px;background:#454545"></div>
<div class="a" style="left:328px;top:1009px;width:1584px;height:1px;background:#454545"></div>
<div class="t" style="left:339px;top:645px;line-height:13px;color:#f0f0f0">Details</div>
<svg style="left:1883px;top:675px" width="14" height="16" viewBox="0 0 14 16"><use href="#help" width="14" height="16"/></svg>
<svg style="left:342px;top:674px" width="16" height="16" viewBox="0 0 16 16"><use href="#pencil" width="16" height="16"/></svg>
<div class="t td" style="left:362px;top:676px;line-height:13px">Edit</div>
<svg style="left:393px;top:674px" width="14" height="16" viewBox="0 0 14 16"><use href="#trash" width="14" height="16"/></svg>
<div class="t tb" style="left:412px;top:676px;line-height:13px">Delete</div>
<div class="a" style="left:453px;top:671px;width:1px;height:22px;background:#3c3c3c"></div>
<svg style="left:463px;top:675px" width="15" height="15" viewBox="0 0 15 15"><use href="#refresh" width="15" height="15"/></svg>
<div class="t tb" style="left:482px;top:676px;line-height:13px">Refresh</div>
<div class="a" style="left:335px;top:710px;width:8px;height:1px;background:#454545"></div>
<div class="a" style="left:396px;top:710px;width:418px;height:1px;background:#454545"></div>
<div class="a" style="left:335px;top:710px;width:1px;height:278px;background:#454545"></div>
<div class="a" style="left:813px;top:710px;width:1px;height:278px;background:#454545"></div>
<div class="a" style="left:335px;top:987px;width:479px;height:1px;background:#454545"></div>
<div class="t" style="left:347px;top:702px;line-height:13px;color:#f6f6f6;font-weight:bold;letter-spacing:0.45px">General</div>
<div class="t lb" style="left:348px;top:733px;line-height:13px">Photo</div>
<div class="a" style="left:349px;top:755px;width:104px;height:110px;background:#f2f2f2"></div>
<div class="a" style="left:350px;top:756px;width:102px;height:108px;background:#9a9a9a"></div>
<div class="a" style="left:351px;top:757px;width:101px;height:107px;overflow:hidden;background:radial-gradient(ellipse at 45% 40%,#fbfdfe,#e0e6ea)"><svg style="left:0;top:0;filter:blur(0.6px)" width="101" height="107" viewBox="0 0 101 107"><path d="M28 38 C20 48 16 62 19 70 C25 76 35 80 42 86 C44 95 44 102 46 106 L64 106 C66 98 68 90 70 84 C78 76 86 66 86 54 C80 48 70 42 58 40 z" fill="#8f8b90"/><path d="M22 62 C28 72 38 78 50 80 L52 74 C42 70 32 64 26 56z" fill="#7c787d"/><path d="M44 52 L56 52 L46 72 z" fill="#d94848"/><path d="M48 76 C56 72 66 72 76 76 L74 86 C64 88 56 86 50 84z" fill="#d8a88c"/><path d="M56 50 C62 58 66 66 70 76 L64 72 C60 64 56 58 54 52z" fill="#a8a4a8"/><path d="M34 30 C32 16 42 8 56 8 C68 8 76 16 74 30 C73 40 68 46 64 46 L40 44 C36 40 34 36 34 30z" fill="#8a4524"/><ellipse cx="52" cy="40" rx="14" ry="15" fill="#e6bca2"/><path d="M38 32 C42 24 58 22 66 30 C64 22 58 18 52 18 C44 18 38 24 38 32z" fill="#8a4524"/><path d="M43 38 h6 M55 39 h6" stroke="#7a6a6a" stroke-width="1.2"/><path d="M46 47 C50 50 55 50 58 47" stroke="#c85a5a" stroke-width="1.6" fill="none"/></svg></div>
<div class="t lb" style="left:459px;top:736px;line-height:13px">T&amp;A ID:</div>
<div class="t lb" style="left:459px;top:764px;line-height:13px">First name:</div>
<div class="t lb" style="left:459px;top:792px;line-height:13px">Last name:</div>
<div class="t lb" style="left:459px;top:820px;line-height:13px">Group:</div>
<div class="t lb" style="left:459px;top:848px;line-height:13px">Logged on:</div>
<div class="t lb" style="left:459px;top:876px;line-height:13px">T&amp;A Mode:</div>
<div class="t lb" style="left:459px;top:904px;line-height:13px">Terminal:</div>
<div class="t lb" style="left:459px;top:932px;line-height:13px">Added by operator:</div>
<div class="t lb" style="left:459px;top:959px;line-height:13px">Deleted by opertor:</div>
<div class="fd" style="left:565px;top:732px;width:50px;height:20px"></div>
<div class="t fv" style="left:569px;top:736px;line-height:13px">008</div>
<div class="fd" style="left:565px;top:760px;width:235px;height:20px"></div>
<div class="t fv" style="left:569px;top:764px;line-height:13px">Allison</div>
<div class="fd" style="left:565px;top:788px;width:235px;height:20px"></div>
<div class="t fv" style="left:569px;top:792px;line-height:13px">Huffman</div>
<div class="fd" style="left:565px;top:816px;width:235px;height:20px"></div>
<div class="t fv" style="left:569px;top:820px;line-height:13px">Team III</div>
<div class="fd" style="left:565px;top:844px;width:235px;height:20px"></div>
<div class="t fv" style="left:569px;top:848px;line-height:13px">Thu 2020-01-02 06:55</div>
<div class="fd" style="left:565px;top:872px;width:235px;height:20px"></div>
<div class="t fv" style="left:569px;top:876px;line-height:13px">[0] T&amp;A - Entry</div>
<div class="fd" style="left:565px;top:900px;width:235px;height:20px"></div>
<div class="t fv" style="left:569px;top:904px;line-height:13px">Production floor entry</div>
<div class="a" style="left:566px;top:931px;width:13px;height:13px;background:#3c3c3c"></div>
<div class="a" style="left:567px;top:932px;width:11px;height:11px;background:#a8a8a8"></div>
<div class="a" style="left:566px;top:958px;width:13px;height:13px;background:#3c3c3c"></div>
<div class="a" style="left:567px;top:959px;width:11px;height:11px;background:#a8a8a8"></div>
<div class="a" style="left:818px;top:710px;width:8px;height:1px;background:#454545"></div>
<div class="a" style="left:857px;top:710px;width:348px;height:1px;background:#454545"></div>
<div class="a" style="left:818px;top:710px;width:1px;height:278px;background:#454545"></div>
<div class="a" style="left:1204px;top:710px;width:1px;height:278px;background:#454545"></div>
<div class="a" style="left:818px;top:987px;width:387px;height:1px;background:#454545"></div>
<div class="t" style="left:829px;top:703px;line-height:13px;color:#f0f0f0">Foto</div>
<div class="a" style="left:1111px;top:607px;width:2px;height:2px;background:#656565"></div>
<div class="a" style="left:1115px;top:607px;width:2px;height:2px;background:#656565"></div>
<div class="a" style="left:1119px;top:607px;width:2px;height:2px;background:#656565"></div>
<div class="a" style="left:1123px;top:607px;width:2px;height:2px;background:#656565"></div>
<div class="a" style="left:1127px;top:607px;width:2px;height:2px;background:#656565"></div>
<div class="a" style="left:830px;top:730px;width:363px;height:238px;background:#454545"></div>
<div class="a" style="left:831px;top:731px;width:361px;height:236px;background:#d4d4d4"></div>
<svg style="left:830px;top:730px" width="363" height="238" viewBox="0 0 363 238">
<rect x="124" y="79" width="92" height="38" fill="#b6cc3c"/>
<rect x="124" y="117" width="92" height="37" fill="#9ab51f"/>
<rect x="215" y="102" width="16" height="15" fill="#ffffff"/>
<rect x="215" y="117" width="16" height="14" fill="#8fd0e4"/>
<path d="M231 102 L251 90 L251 117 L231 117z" fill="#b6cc3c"/>
<path d="M231 117 L251 117 L251 142 L231 131z" fill="#9ab51f"/>
<circle cx="181" cy="119" r="94" fill="none" stroke="#1f1a17" stroke-width="18"/>
<path d="M120 180 L248 55" stroke="#1f1a17" stroke-width="18"/>
</svg>
<div class="a" style="left:0px;top:1018px;width:1920px;height:22px;background:#595959"></div>
<div class="a" style="left:0px;top:1018px;width:1920px;height:1px;background:#454545"></div>
<div class="t" style="left:6px;top:1023px;line-height:13px;color:#f0f0f0">RCP Master 4 4.0.2.3550</div>
<div class="a" style="left:135px;top:1020px;width:1px;height:18px;background:#4a4a4a"></div>
<svg style="left:144px;top:1021px" width="14" height="17" viewBox="0 0 14 17"><ellipse cx="7" cy="3" rx="6.5" ry="2.6" fill="#35b0c8"/><path d="M.5 3v11c0 1.5 3 2.6 6.5 2.6s6.5-1.1 6.5-2.6V3" fill="#35b0c8"/><path d="M.5 7c0 1.5 3 2.6 6.5 2.6s6.5-1.1 6.5-2.6M.5 11c0 1.5 3 2.6 6.5 2.6s6.5-1.1 6.5-2.6" fill="none" stroke="#e8f8fc" stroke-width="1"/><ellipse cx="7" cy="3" rx="5" ry="1.6" fill="#e8f8fc"/></svg>
<div class="t" style="left:169px;top:1023px;line-height:13px;color:#f4f4f4;font-weight:bold;letter-spacing:0.5px">Database: C:\Program Files (x86)\ROGER\RCPMaster4\App_data\DemoEN.sdf</div>
<div class="a" style="left:616px;top:1020px;width:1px;height:18px;background:#4a4a4a"></div>
<svg style="left:624px;top:1021px" width="16" height="16" viewBox="0 0 16 16"><circle cx="8" cy="8" r="7.5" fill="#66a83a"/><path d="M4.2 8.3l2.6 2.6 5-5" stroke="#fff" stroke-width="2" fill="none"/></svg>
<div class="t" style="left:644px;top:1023px;line-height:13px;color:#f0f0f0">Licensing Server: 192.168.0.95:8850</div>
<svg style="left:1709px;top:1021px" width="16" height="17" viewBox="0 0 16 17"><rect x="1" y="1" width="9" height="13" fill="#aaa"/><path d="M2.5 4h6M2.5 6.5h6M2.5 9h6" stroke="#777"/><rect x="7" y="5" width="9" height="11" fill="#bbb"/><path d="M12 7v6M10 11l2 2 2-2" stroke="#666" stroke-width="1.2" fill="none"/></svg>
<div class="a" style="left:1732px;top:1019px;width:1px;height:19px;background:#4a4a4a"></div>
<div class="a" style="left:1734px;top:1019px;width:28px;height:21px;background:#3e3e3e"></div>
<svg style="left:1742px;top:1024px" width="11" height="10" viewBox="0 0 11 10"><rect x=".5" y=".5" width="10" height="9" fill="none" stroke="#6a6a6a" stroke-width="1"/><rect x="0" y="0" width="11" height="1.2" fill="#777"/><rect x=".5" y="1.5" width="2.5" height="8" fill="#f4f4f4"/></svg>
<svg style="left:1771px;top:1024px" width="10" height="11" viewBox="0 0 10 11"><path d="M.5 1h4v8h-4zM5.5 1h4v8h-4z" fill="none" stroke="#e8e8e8" stroke-width=".9"/><path d="M1.5 3h2M1.5 5h2M1.5 7h2M6.5 3h2M6.5 5h2M6.5 7h2" stroke="#e8e8e8" stroke-width=".8"/><path d="M1 10.5h8" stroke="#999" stroke-width=".8" stroke-dasharray="1 1"/></svg>
<div class="a" style="left:1791px;top:1019px;width:1px;height:19px;background:#4a4a4a"></div>
<svg style="left:1800px;top:1022px" width="13" height="13" viewBox="0 0 13 13"><rect width="13" height="13" rx="1" fill="#b4b4b4"/><rect x=".5" y=".5" width="12" height="12" rx="1" fill="none" stroke="#c8c8c8"/><circle cx="6.5" cy="5" r="1.9" fill="#707070"/><path d="M3 10.5c0-2.2 1.5-3.2 3.5-3.2s3.5 1 3.5 3.2z" fill="#707070"/></svg>
<div class="t" style="left:1819px;top:1023px;line-height:13px;color:#f4f4f4;font-weight:bold;letter-spacing:0.4px">Operator: Admin</div>
</body></html>
